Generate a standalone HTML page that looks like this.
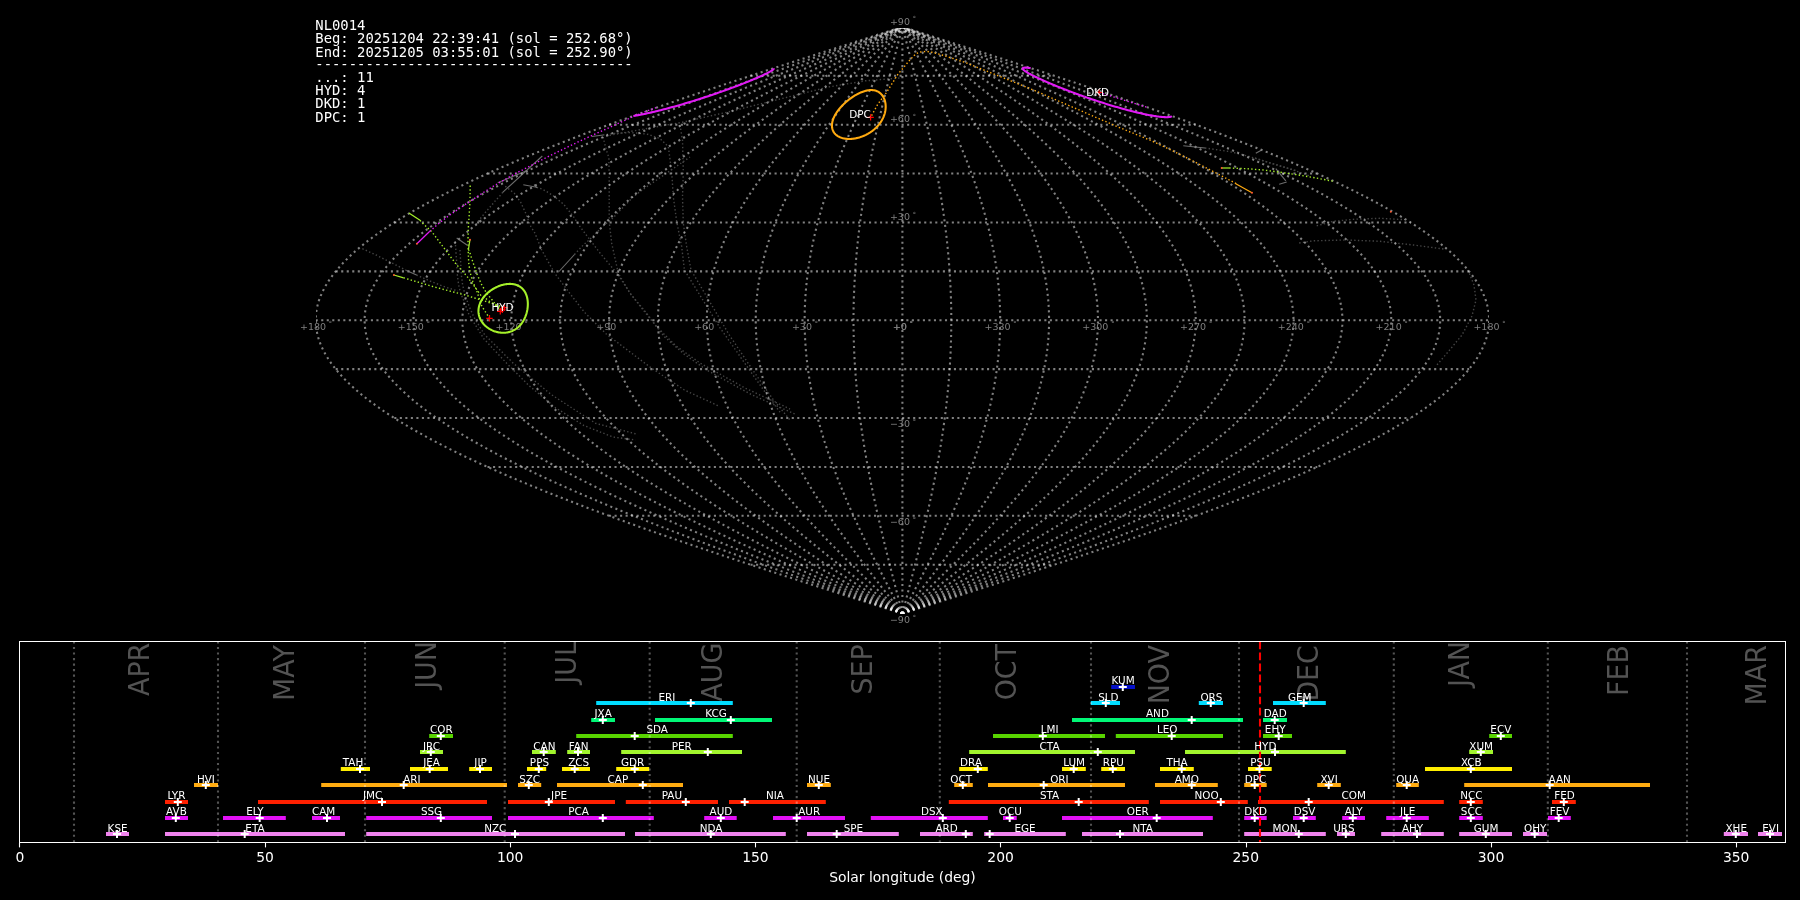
<!DOCTYPE html>
<html lang="en"><head><meta charset="utf-8"><title>NL0014 radiants</title>
<style>
html,body{margin:0;padding:0;background:#000;}
body{width:1800px;height:900px;overflow:hidden;}
svg{display:block;will-change:transform;}
text{white-space:pre;}
</style></head><body>
<svg width="1800" height="900" viewBox="0 0 1800 900">
<rect width="1800" height="900" fill="#000"/>
<clipPath id="skyclip"><rect x="316" y="28" width="1173" height="586"/></clipPath>
<g clip-path="url(#skyclip)" fill="none" stroke="#ffffff" stroke-opacity="0.5" stroke-width="2.08" stroke-dasharray="2.08 3.44">
<path d="M750.55 564.71 H1054.25"/>
<path d="M609.04 515.82 H1195.76"/>
<path d="M487.53 466.93 H1317.27"/>
<path d="M394.29 418.03 H1410.51"/>
<path d="M335.68 369.14 H1469.12"/>
<path d="M315.69 320.25 H1489.11"/>
<path d="M335.68 271.36 H1469.12"/>
<path d="M394.29 222.47 H1410.51"/>
<path d="M487.53 173.57 H1317.27"/>
<path d="M609.04 124.68 H1195.76"/>
<path d="M750.55 75.79 H1054.25"/>
<path d="M902.4 613.61 L917.76 608.72 L933.11 603.83 L948.43 598.94 L963.73 594.05 L978.98 589.16 L994.18 584.27 L1009.32 579.38 L1024.38 574.49 L1039.36 569.6 L1054.25 564.71 L1069.03 559.82 L1083.7 554.93 L1098.25 550.04 L1112.66 545.16 L1126.92 540.27 L1141.04 535.38 L1154.99 530.49 L1168.76 525.6 L1182.35 520.71 L1195.76 515.82 L1208.96 510.93 L1221.95 506.04 L1234.72 501.15 L1247.26 496.26 L1259.57 491.37 L1271.63 486.48 L1283.44 481.6 L1294.99 476.71 L1306.26 471.82 L1317.27 466.93 L1327.98 462.04 L1338.41 457.15 L1348.54 452.26 L1358.36 447.37 L1367.87 442.48 L1377.06 437.59 L1385.92 432.7 L1394.46 427.81 L1402.65 422.92 L1410.51 418.03 L1418.01 413.15 L1425.16 408.26 L1431.96 403.37 L1438.39 398.48 L1444.45 393.59 L1450.14 388.7 L1455.46 383.81 L1460.39 378.92 L1464.95 374.03 L1469.12 369.14 L1472.9 364.25 L1476.29 359.36 L1479.29 354.47 L1481.89 349.59 L1484.09 344.7 L1485.9 339.81 L1487.3 334.92 L1488.31 330.03 L1488.91 325.14 L1489.11 320.25 L1488.91 315.36 L1488.31 310.47 L1487.3 305.58 L1485.9 300.69 L1484.09 295.8 L1481.89 290.91 L1479.29 286.03 L1476.29 281.14 L1472.9 276.25 L1469.12 271.36 L1464.95 266.47 L1460.39 261.58 L1455.46 256.69 L1450.14 251.8 L1444.45 246.91 L1438.39 242.02 L1431.96 237.13 L1425.16 232.24 L1418.01 227.35 L1410.51 222.47 L1402.65 217.58 L1394.46 212.69 L1385.92 207.8 L1377.06 202.91 L1367.87 198.02 L1358.36 193.13 L1348.54 188.24 L1338.41 183.35 L1327.98 178.46 L1317.27 173.57 L1306.26 168.68 L1294.99 163.79 L1283.44 158.9 L1271.63 154.02 L1259.57 149.13 L1247.26 144.24 L1234.72 139.35 L1221.95 134.46 L1208.96 129.57 L1195.76 124.68 L1182.35 119.79 L1168.76 114.9 L1154.99 110.01 L1141.04 105.12 L1126.92 100.23 L1112.66 95.34 L1098.25 90.46 L1083.7 85.57 L1069.03 80.68 L1054.25 75.79 L1039.36 70.9 L1024.38 66.01 L1009.32 61.12 L994.18 56.23 L978.98 51.34 L963.73 46.45 L948.43 41.56 L933.11 36.67 L917.76 31.78 L902.4 26.89"/>
<path d="M902.4 613.61 L916.48 608.72 L930.55 603.83 L944.6 598.94 L958.62 594.05 L972.6 589.16 L986.53 584.27 L1000.41 579.38 L1014.22 574.49 L1027.95 569.6 L1041.6 564.71 L1055.15 559.82 L1068.59 554.93 L1081.93 550.04 L1095.14 545.16 L1108.21 540.27 L1121.15 535.38 L1133.94 530.49 L1146.56 525.6 L1159.02 520.71 L1171.31 515.82 L1183.41 510.93 L1195.32 506.04 L1207.02 501.15 L1218.52 496.26 L1229.8 491.37 L1240.86 486.48 L1251.68 481.6 L1262.27 476.71 L1272.61 471.82 L1282.69 466.93 L1292.52 462.04 L1302.08 457.15 L1311.36 452.26 L1320.36 447.37 L1329.08 442.48 L1337.5 437.59 L1345.63 432.7 L1353.45 427.81 L1360.96 422.92 L1368.16 418.03 L1375.04 413.15 L1381.6 408.26 L1387.83 403.37 L1393.72 398.48 L1399.28 393.59 L1404.5 388.7 L1409.37 383.81 L1413.89 378.92 L1418.07 374.03 L1421.89 369.14 L1425.36 364.25 L1428.46 359.36 L1431.21 354.47 L1433.6 349.59 L1435.62 344.7 L1437.27 339.81 L1438.56 334.92 L1439.48 330.03 L1440.03 325.14 L1440.22 320.25 L1440.03 315.36 L1439.48 310.47 L1438.56 305.58 L1437.27 300.69 L1435.62 295.8 L1433.6 290.91 L1431.21 286.03 L1428.46 281.14 L1425.36 276.25 L1421.89 271.36 L1418.07 266.47 L1413.89 261.58 L1409.37 256.69 L1404.5 251.8 L1399.28 246.91 L1393.72 242.02 L1387.83 237.13 L1381.6 232.24 L1375.04 227.35 L1368.16 222.47 L1360.96 217.58 L1353.45 212.69 L1345.63 207.8 L1337.5 202.91 L1329.08 198.02 L1320.36 193.13 L1311.36 188.24 L1302.08 183.35 L1292.52 178.46 L1282.69 173.57 L1272.61 168.68 L1262.27 163.79 L1251.68 158.9 L1240.86 154.02 L1229.8 149.13 L1218.52 144.24 L1207.02 139.35 L1195.32 134.46 L1183.41 129.57 L1171.31 124.68 L1159.02 119.79 L1146.56 114.9 L1133.94 110.01 L1121.15 105.12 L1108.21 100.23 L1095.14 95.34 L1081.93 90.46 L1068.59 85.57 L1055.15 80.68 L1041.6 75.79 L1027.95 70.9 L1014.22 66.01 L1000.41 61.12 L986.53 56.23 L972.6 51.34 L958.62 46.45 L944.6 41.56 L930.55 36.67 L916.48 31.78 L902.4 26.89"/>
<path d="M902.4 613.61 L915.2 608.72 L927.99 603.83 L940.76 598.94 L953.51 594.05 L966.22 589.16 L978.88 584.27 L991.5 579.38 L1004.05 574.49 L1016.54 569.6 L1028.94 564.71 L1041.26 559.82 L1053.49 554.93 L1065.61 550.04 L1077.62 545.16 L1089.5 540.27 L1101.26 535.38 L1112.89 530.49 L1124.37 525.6 L1135.69 520.71 L1146.86 515.82 L1157.86 510.93 L1168.69 506.04 L1179.33 501.15 L1189.78 496.26 L1200.04 491.37 L1210.09 486.48 L1219.93 481.6 L1229.55 476.71 L1238.95 471.82 L1248.12 466.93 L1257.05 462.04 L1265.74 457.15 L1274.18 452.26 L1282.37 447.37 L1290.29 442.48 L1297.95 437.59 L1305.34 432.7 L1312.45 427.81 L1319.28 422.92 L1325.82 418.03 L1332.08 413.15 L1338.04 408.26 L1343.7 403.37 L1349.06 398.48 L1354.11 393.59 L1358.85 388.7 L1363.28 383.81 L1367.4 378.92 L1371.19 374.03 L1374.67 369.14 L1377.82 364.25 L1380.64 359.36 L1383.14 354.47 L1385.31 349.59 L1387.14 344.7 L1388.65 339.81 L1389.82 334.92 L1390.65 330.03 L1391.16 325.14 L1391.33 320.25 L1391.16 315.36 L1390.65 310.47 L1389.82 305.58 L1388.65 300.69 L1387.14 295.8 L1385.31 290.91 L1383.14 286.03 L1380.64 281.14 L1377.82 276.25 L1374.67 271.36 L1371.19 266.47 L1367.4 261.58 L1363.28 256.69 L1358.85 251.8 L1354.11 246.91 L1349.06 242.02 L1343.7 237.13 L1338.04 232.24 L1332.08 227.35 L1325.82 222.47 L1319.28 217.58 L1312.45 212.69 L1305.34 207.8 L1297.95 202.91 L1290.29 198.02 L1282.37 193.13 L1274.18 188.24 L1265.74 183.35 L1257.05 178.46 L1248.12 173.57 L1238.95 168.68 L1229.55 163.79 L1219.93 158.9 L1210.09 154.02 L1200.04 149.13 L1189.78 144.24 L1179.33 139.35 L1168.69 134.46 L1157.86 129.57 L1146.86 124.68 L1135.69 119.79 L1124.37 114.9 L1112.89 110.01 L1101.26 105.12 L1089.5 100.23 L1077.62 95.34 L1065.61 90.46 L1053.49 85.57 L1041.26 80.68 L1028.94 75.79 L1016.54 70.9 L1004.05 66.01 L991.5 61.12 L978.88 56.23 L966.22 51.34 L953.51 46.45 L940.76 41.56 L927.99 36.67 L915.2 31.78 L902.4 26.89"/>
<path d="M902.4 613.61 L913.92 608.72 L925.43 603.83 L936.92 598.94 L948.4 594.05 L959.84 589.16 L971.24 584.27 L982.59 579.38 L993.89 574.49 L1005.12 569.6 L1016.29 564.71 L1027.38 559.82 L1038.38 554.93 L1049.29 550.04 L1060.09 545.16 L1070.79 540.27 L1081.38 535.38 L1091.84 530.49 L1102.17 525.6 L1112.37 520.71 L1122.42 515.82 L1132.32 510.93 L1142.06 506.04 L1151.64 501.15 L1161.04 496.26 L1170.27 491.37 L1179.32 486.48 L1188.18 481.6 L1196.84 476.71 L1205.3 471.82 L1213.55 466.93 L1221.59 462.04 L1229.41 457.15 L1237 452.26 L1244.37 447.37 L1251.5 442.48 L1258.39 437.59 L1265.04 432.7 L1271.44 427.81 L1277.59 422.92 L1283.48 418.03 L1289.11 413.15 L1294.47 408.26 L1299.57 403.37 L1304.39 398.48 L1308.94 393.59 L1313.21 388.7 L1317.19 383.81 L1320.9 378.92 L1324.31 374.03 L1327.44 369.14 L1330.27 364.25 L1332.82 359.36 L1335.06 354.47 L1337.01 349.59 L1338.67 344.7 L1340.02 339.81 L1341.08 334.92 L1341.83 330.03 L1342.28 325.14 L1342.43 320.25 L1342.28 315.36 L1341.83 310.47 L1341.08 305.58 L1340.02 300.69 L1338.67 295.8 L1337.01 290.91 L1335.06 286.03 L1332.82 281.14 L1330.27 276.25 L1327.44 271.36 L1324.31 266.47 L1320.9 261.58 L1317.19 256.69 L1313.21 251.8 L1308.94 246.91 L1304.39 242.02 L1299.57 237.13 L1294.47 232.24 L1289.11 227.35 L1283.48 222.47 L1277.59 217.58 L1271.44 212.69 L1265.04 207.8 L1258.39 202.91 L1251.5 198.02 L1244.37 193.13 L1237 188.24 L1229.41 183.35 L1221.59 178.46 L1213.55 173.57 L1205.3 168.68 L1196.84 163.79 L1188.18 158.9 L1179.32 154.02 L1170.27 149.13 L1161.04 144.24 L1151.64 139.35 L1142.06 134.46 L1132.32 129.57 L1122.42 124.68 L1112.37 119.79 L1102.17 114.9 L1091.84 110.01 L1081.38 105.12 L1070.79 100.23 L1060.09 95.34 L1049.29 90.46 L1038.38 85.57 L1027.38 80.68 L1016.29 75.79 L1005.12 70.9 L993.89 66.01 L982.59 61.12 L971.24 56.23 L959.84 51.34 L948.4 46.45 L936.92 41.56 L925.43 36.67 L913.92 31.78 L902.4 26.89"/>
<path d="M902.4 613.61 L912.64 608.72 L922.87 603.83 L933.09 598.94 L943.29 594.05 L953.45 589.16 L963.59 584.27 L973.68 579.38 L983.72 574.49 L993.71 569.6 L1003.63 564.71 L1013.49 559.82 L1023.27 554.93 L1032.97 550.04 L1042.57 545.16 L1052.08 540.27 L1061.49 535.38 L1070.79 530.49 L1079.97 525.6 L1089.04 520.71 L1097.97 515.82 L1106.77 510.93 L1115.43 506.04 L1123.94 501.15 L1132.31 496.26 L1140.51 491.37 L1148.55 486.48 L1156.43 481.6 L1164.12 476.71 L1171.64 471.82 L1178.98 466.93 L1186.12 462.04 L1193.07 457.15 L1199.83 452.26 L1206.37 447.37 L1212.71 442.48 L1218.84 437.59 L1224.75 432.7 L1230.44 427.81 L1235.9 422.92 L1241.14 418.03 L1246.14 413.15 L1250.91 408.26 L1255.44 403.37 L1259.72 398.48 L1263.77 393.59 L1267.56 388.7 L1271.1 383.81 L1274.4 378.92 L1277.43 374.03 L1280.21 369.14 L1282.73 364.25 L1284.99 359.36 L1286.99 354.47 L1288.72 349.59 L1290.19 344.7 L1291.4 339.81 L1292.33 334.92 L1293 330.03 L1293.41 325.14 L1293.54 320.25 L1293.41 315.36 L1293 310.47 L1292.33 305.58 L1291.4 300.69 L1290.19 295.8 L1288.72 290.91 L1286.99 286.03 L1284.99 281.14 L1282.73 276.25 L1280.21 271.36 L1277.43 266.47 L1274.4 261.58 L1271.1 256.69 L1267.56 251.8 L1263.77 246.91 L1259.72 242.02 L1255.44 237.13 L1250.91 232.24 L1246.14 227.35 L1241.14 222.47 L1235.9 217.58 L1230.44 212.69 L1224.75 207.8 L1218.84 202.91 L1212.71 198.02 L1206.37 193.13 L1199.83 188.24 L1193.07 183.35 L1186.12 178.46 L1178.98 173.57 L1171.64 168.68 L1164.12 163.79 L1156.43 158.9 L1148.55 154.02 L1140.51 149.13 L1132.31 144.24 L1123.94 139.35 L1115.43 134.46 L1106.77 129.57 L1097.97 124.68 L1089.04 119.79 L1079.97 114.9 L1070.79 110.01 L1061.49 105.12 L1052.08 100.23 L1042.57 95.34 L1032.97 90.46 L1023.27 85.57 L1013.49 80.68 L1003.63 75.79 L993.71 70.9 L983.72 66.01 L973.68 61.12 L963.59 56.23 L953.45 51.34 L943.29 46.45 L933.09 41.56 L922.87 36.67 L912.64 31.78 L902.4 26.89"/>
<path d="M902.4 613.61 L911.36 608.72 L920.31 603.83 L929.25 598.94 L938.17 594.05 L947.07 589.16 L955.94 584.27 L964.77 579.38 L973.56 574.49 L982.3 569.6 L990.98 564.71 L999.6 559.82 L1008.16 554.93 L1016.64 550.04 L1025.05 545.16 L1033.37 540.27 L1041.6 535.38 L1049.74 530.49 L1057.78 525.6 L1065.71 520.71 L1073.52 515.82 L1081.22 510.93 L1088.8 506.04 L1096.25 501.15 L1103.57 496.26 L1110.75 491.37 L1117.78 486.48 L1124.67 481.6 L1131.41 476.71 L1137.99 471.82 L1144.41 466.93 L1150.66 462.04 L1156.74 457.15 L1162.65 452.26 L1168.38 447.37 L1173.92 442.48 L1179.28 437.59 L1184.46 432.7 L1189.43 427.81 L1194.21 422.92 L1198.8 418.03 L1203.17 413.15 L1207.34 408.26 L1211.31 403.37 L1215.06 398.48 L1218.6 393.59 L1221.92 388.7 L1225.02 383.81 L1227.9 378.92 L1230.55 374.03 L1232.99 369.14 L1235.19 364.25 L1237.17 359.36 L1238.92 354.47 L1240.43 349.59 L1241.72 344.7 L1242.77 339.81 L1243.59 334.92 L1244.18 330.03 L1244.53 325.14 L1244.65 320.25 L1244.53 315.36 L1244.18 310.47 L1243.59 305.58 L1242.77 300.69 L1241.72 295.8 L1240.43 290.91 L1238.92 286.03 L1237.17 281.14 L1235.19 276.25 L1232.99 271.36 L1230.55 266.47 L1227.9 261.58 L1225.02 256.69 L1221.92 251.8 L1218.6 246.91 L1215.06 242.02 L1211.31 237.13 L1207.34 232.24 L1203.17 227.35 L1198.8 222.47 L1194.21 217.58 L1189.43 212.69 L1184.46 207.8 L1179.28 202.91 L1173.92 198.02 L1168.38 193.13 L1162.65 188.24 L1156.74 183.35 L1150.66 178.46 L1144.41 173.57 L1137.99 168.68 L1131.41 163.79 L1124.67 158.9 L1117.78 154.02 L1110.75 149.13 L1103.57 144.24 L1096.25 139.35 L1088.8 134.46 L1081.22 129.57 L1073.52 124.68 L1065.71 119.79 L1057.78 114.9 L1049.74 110.01 L1041.6 105.12 L1033.37 100.23 L1025.05 95.34 L1016.64 90.46 L1008.16 85.57 L999.6 80.68 L990.98 75.79 L982.3 70.9 L973.56 66.01 L964.77 61.12 L955.94 56.23 L947.07 51.34 L938.17 46.45 L929.25 41.56 L920.31 36.67 L911.36 31.78 L902.4 26.89"/>
<path d="M902.4 613.61 L910.08 608.72 L917.75 603.83 L925.42 598.94 L933.06 594.05 L940.69 589.16 L948.29 584.27 L955.86 579.38 L963.39 574.49 L970.88 569.6 L978.33 564.71 L985.72 559.82 L993.05 554.93 L1000.32 550.04 L1007.53 545.16 L1014.66 540.27 L1021.72 535.38 L1028.69 530.49 L1035.58 525.6 L1042.38 520.71 L1049.08 515.82 L1055.68 510.93 L1062.17 506.04 L1068.56 501.15 L1074.83 496.26 L1080.98 491.37 L1087.01 486.48 L1092.92 481.6 L1098.69 476.71 L1104.33 471.82 L1109.83 466.93 L1115.19 462.04 L1120.41 457.15 L1125.47 452.26 L1130.38 447.37 L1135.13 442.48 L1139.73 437.59 L1144.16 432.7 L1148.43 427.81 L1152.53 422.92 L1156.45 418.03 L1160.21 413.15 L1163.78 408.26 L1167.18 403.37 L1170.39 398.48 L1173.42 393.59 L1176.27 388.7 L1178.93 383.81 L1181.4 378.92 L1183.67 374.03 L1185.76 369.14 L1187.65 364.25 L1189.34 359.36 L1190.84 354.47 L1192.14 349.59 L1193.25 344.7 L1194.15 339.81 L1194.85 334.92 L1195.35 330.03 L1195.65 325.14 L1195.76 320.25 L1195.65 315.36 L1195.35 310.47 L1194.85 305.58 L1194.15 300.69 L1193.25 295.8 L1192.14 290.91 L1190.84 286.03 L1189.34 281.14 L1187.65 276.25 L1185.76 271.36 L1183.67 266.47 L1181.4 261.58 L1178.93 256.69 L1176.27 251.8 L1173.42 246.91 L1170.39 242.02 L1167.18 237.13 L1163.78 232.24 L1160.21 227.35 L1156.45 222.47 L1152.53 217.58 L1148.43 212.69 L1144.16 207.8 L1139.73 202.91 L1135.13 198.02 L1130.38 193.13 L1125.47 188.24 L1120.41 183.35 L1115.19 178.46 L1109.83 173.57 L1104.33 168.68 L1098.69 163.79 L1092.92 158.9 L1087.01 154.02 L1080.98 149.13 L1074.83 144.24 L1068.56 139.35 L1062.17 134.46 L1055.68 129.57 L1049.08 124.68 L1042.38 119.79 L1035.58 114.9 L1028.69 110.01 L1021.72 105.12 L1014.66 100.23 L1007.53 95.34 L1000.32 90.46 L993.05 85.57 L985.72 80.68 L978.33 75.79 L970.88 70.9 L963.39 66.01 L955.86 61.12 L948.29 56.23 L940.69 51.34 L933.06 46.45 L925.42 41.56 L917.75 36.67 L910.08 31.78 L902.4 26.89"/>
<path d="M902.4 613.61 L908.8 608.72 L915.19 603.83 L921.58 598.94 L927.95 594.05 L934.31 589.16 L940.64 584.27 L946.95 579.38 L953.23 574.49 L959.47 569.6 L965.67 564.71 L971.83 559.82 L977.94 554.93 L984 550.04 L990.01 545.16 L995.95 540.27 L1001.83 535.38 L1007.64 530.49 L1013.38 525.6 L1019.05 520.71 L1024.63 515.82 L1030.13 510.93 L1035.54 506.04 L1040.87 501.15 L1046.09 496.26 L1051.22 491.37 L1056.25 486.48 L1061.17 481.6 L1065.98 476.71 L1070.68 471.82 L1075.26 466.93 L1079.73 462.04 L1084.07 457.15 L1088.29 452.26 L1092.38 447.37 L1096.35 442.48 L1100.17 437.59 L1103.87 432.7 L1107.42 427.81 L1110.84 422.92 L1114.11 418.03 L1117.24 413.15 L1120.22 408.26 L1123.05 403.37 L1125.73 398.48 L1128.25 393.59 L1130.63 388.7 L1132.84 383.81 L1134.9 378.92 L1136.8 374.03 L1138.53 369.14 L1140.11 364.25 L1141.52 359.36 L1142.77 354.47 L1143.85 349.59 L1144.77 344.7 L1145.52 339.81 L1146.11 334.92 L1146.53 330.03 L1146.78 325.14 L1146.86 320.25 L1146.78 315.36 L1146.53 310.47 L1146.11 305.58 L1145.52 300.69 L1144.77 295.8 L1143.85 290.91 L1142.77 286.03 L1141.52 281.14 L1140.11 276.25 L1138.53 271.36 L1136.8 266.47 L1134.9 261.58 L1132.84 256.69 L1130.63 251.8 L1128.25 246.91 L1125.73 242.02 L1123.05 237.13 L1120.22 232.24 L1117.24 227.35 L1114.11 222.47 L1110.84 217.58 L1107.42 212.69 L1103.87 207.8 L1100.17 202.91 L1096.35 198.02 L1092.38 193.13 L1088.29 188.24 L1084.07 183.35 L1079.73 178.46 L1075.26 173.57 L1070.68 168.68 L1065.98 163.79 L1061.17 158.9 L1056.25 154.02 L1051.22 149.13 L1046.09 144.24 L1040.87 139.35 L1035.54 134.46 L1030.13 129.57 L1024.63 124.68 L1019.05 119.79 L1013.38 114.9 L1007.64 110.01 L1001.83 105.12 L995.95 100.23 L990.01 95.34 L984 90.46 L977.94 85.57 L971.83 80.68 L965.67 75.79 L959.47 70.9 L953.23 66.01 L946.95 61.12 L940.64 56.23 L934.31 51.34 L927.95 46.45 L921.58 41.56 L915.19 36.67 L908.8 31.78 L902.4 26.89"/>
<path d="M902.4 613.61 L907.52 608.72 L912.64 603.83 L917.74 598.94 L922.84 594.05 L927.93 589.16 L932.99 584.27 L938.04 579.38 L943.06 574.49 L948.05 569.6 L953.02 564.71 L957.94 559.82 L962.83 554.93 L967.68 550.04 L972.49 545.16 L977.24 540.27 L981.95 535.38 L986.6 530.49 L991.19 525.6 L995.72 520.71 L1000.18 515.82 L1004.59 510.93 L1008.92 506.04 L1013.17 501.15 L1017.35 496.26 L1021.46 491.37 L1025.48 486.48 L1029.41 481.6 L1033.26 476.71 L1037.02 471.82 L1040.69 466.93 L1044.26 462.04 L1047.74 457.15 L1051.11 452.26 L1054.39 447.37 L1057.56 442.48 L1060.62 437.59 L1063.57 432.7 L1066.42 427.81 L1069.15 422.92 L1071.77 418.03 L1074.27 413.15 L1076.65 408.26 L1078.92 403.37 L1081.06 398.48 L1083.08 393.59 L1084.98 388.7 L1086.75 383.81 L1088.4 378.92 L1089.92 374.03 L1091.31 369.14 L1092.57 364.25 L1093.7 359.36 L1094.7 354.47 L1095.56 349.59 L1096.3 344.7 L1096.9 339.81 L1097.37 334.92 L1097.7 330.03 L1097.9 325.14 L1097.97 320.25 L1097.9 315.36 L1097.7 310.47 L1097.37 305.58 L1096.9 300.69 L1096.3 295.8 L1095.56 290.91 L1094.7 286.03 L1093.7 281.14 L1092.57 276.25 L1091.31 271.36 L1089.92 266.47 L1088.4 261.58 L1086.75 256.69 L1084.98 251.8 L1083.08 246.91 L1081.06 242.02 L1078.92 237.13 L1076.65 232.24 L1074.27 227.35 L1071.77 222.47 L1069.15 217.58 L1066.42 212.69 L1063.57 207.8 L1060.62 202.91 L1057.56 198.02 L1054.39 193.13 L1051.11 188.24 L1047.74 183.35 L1044.26 178.46 L1040.69 173.57 L1037.02 168.68 L1033.26 163.79 L1029.41 158.9 L1025.48 154.02 L1021.46 149.13 L1017.35 144.24 L1013.17 139.35 L1008.92 134.46 L1004.59 129.57 L1000.18 124.68 L995.72 119.79 L991.19 114.9 L986.6 110.01 L981.95 105.12 L977.24 100.23 L972.49 95.34 L967.68 90.46 L962.83 85.57 L957.94 80.68 L953.02 75.79 L948.05 70.9 L943.06 66.01 L938.04 61.12 L932.99 56.23 L927.93 51.34 L922.84 46.45 L917.74 41.56 L912.64 36.67 L907.52 31.78 L902.4 26.89"/>
<path d="M902.4 613.61 L906.24 608.72 L910.08 603.83 L913.91 598.94 L917.73 594.05 L921.55 589.16 L925.35 584.27 L929.13 579.38 L932.9 574.49 L936.64 569.6 L940.36 564.71 L944.06 559.82 L947.73 554.93 L951.36 550.04 L954.96 545.16 L958.53 540.27 L962.06 535.38 L965.55 530.49 L968.99 525.6 L972.39 520.71 L975.74 515.82 L979.04 510.93 L982.29 506.04 L985.48 501.15 L988.61 496.26 L991.69 491.37 L994.71 486.48 L997.66 481.6 L1000.55 476.71 L1003.37 471.82 L1006.12 466.93 L1008.8 462.04 L1011.4 457.15 L1013.93 452.26 L1016.39 447.37 L1018.77 442.48 L1021.06 437.59 L1023.28 432.7 L1025.41 427.81 L1027.46 422.92 L1029.43 418.03 L1031.3 413.15 L1033.09 408.26 L1034.79 403.37 L1036.4 398.48 L1037.91 393.59 L1039.34 388.7 L1040.66 383.81 L1041.9 378.92 L1043.04 374.03 L1044.08 369.14 L1045.02 364.25 L1045.87 359.36 L1046.62 354.47 L1047.27 349.59 L1047.82 344.7 L1048.27 339.81 L1048.63 334.92 L1048.88 330.03 L1049.03 325.14 L1049.08 320.25 L1049.03 315.36 L1048.88 310.47 L1048.63 305.58 L1048.27 300.69 L1047.82 295.8 L1047.27 290.91 L1046.62 286.03 L1045.87 281.14 L1045.02 276.25 L1044.08 271.36 L1043.04 266.47 L1041.9 261.58 L1040.66 256.69 L1039.34 251.8 L1037.91 246.91 L1036.4 242.02 L1034.79 237.13 L1033.09 232.24 L1031.3 227.35 L1029.43 222.47 L1027.46 217.58 L1025.41 212.69 L1023.28 207.8 L1021.06 202.91 L1018.77 198.02 L1016.39 193.13 L1013.93 188.24 L1011.4 183.35 L1008.8 178.46 L1006.12 173.57 L1003.37 168.68 L1000.55 163.79 L997.66 158.9 L994.71 154.02 L991.69 149.13 L988.61 144.24 L985.48 139.35 L982.29 134.46 L979.04 129.57 L975.74 124.68 L972.39 119.79 L968.99 114.9 L965.55 110.01 L962.06 105.12 L958.53 100.23 L954.96 95.34 L951.36 90.46 L947.73 85.57 L944.06 80.68 L940.36 75.79 L936.64 70.9 L932.9 66.01 L929.13 61.12 L925.35 56.23 L921.55 51.34 L917.73 46.45 L913.91 41.56 L910.08 36.67 L906.24 31.78 L902.4 26.89"/>
<path d="M902.4 613.61 L904.96 608.72 L907.52 603.83 L910.07 598.94 L912.62 594.05 L915.16 589.16 L917.7 584.27 L920.22 579.38 L922.73 574.49 L925.23 569.6 L927.71 564.71 L930.17 559.82 L932.62 554.93 L935.04 550.04 L937.44 545.16 L939.82 540.27 L942.17 535.38 L944.5 530.49 L946.79 525.6 L949.06 520.71 L951.29 515.82 L953.49 510.93 L955.66 506.04 L957.79 501.15 L959.88 496.26 L961.93 491.37 L963.94 486.48 L965.91 481.6 L967.83 476.71 L969.71 471.82 L971.54 466.93 L973.33 462.04 L975.07 457.15 L976.76 452.26 L978.39 447.37 L979.98 442.48 L981.51 437.59 L982.99 432.7 L984.41 427.81 L985.78 422.92 L987.08 418.03 L988.34 413.15 L989.53 408.26 L990.66 403.37 L991.73 398.48 L992.74 393.59 L993.69 388.7 L994.58 383.81 L995.4 378.92 L996.16 374.03 L996.85 369.14 L997.48 364.25 L998.05 359.36 L998.55 354.47 L998.98 349.59 L999.35 344.7 L999.65 339.81 L999.88 334.92 L1000.05 330.03 L1000.15 325.14 L1000.18 320.25 L1000.15 315.36 L1000.05 310.47 L999.88 305.58 L999.65 300.69 L999.35 295.8 L998.98 290.91 L998.55 286.03 L998.05 281.14 L997.48 276.25 L996.85 271.36 L996.16 266.47 L995.4 261.58 L994.58 256.69 L993.69 251.8 L992.74 246.91 L991.73 242.02 L990.66 237.13 L989.53 232.24 L988.34 227.35 L987.08 222.47 L985.78 217.58 L984.41 212.69 L982.99 207.8 L981.51 202.91 L979.98 198.02 L978.39 193.13 L976.76 188.24 L975.07 183.35 L973.33 178.46 L971.54 173.57 L969.71 168.68 L967.83 163.79 L965.91 158.9 L963.94 154.02 L961.93 149.13 L959.88 144.24 L957.79 139.35 L955.66 134.46 L953.49 129.57 L951.29 124.68 L949.06 119.79 L946.79 114.9 L944.5 110.01 L942.17 105.12 L939.82 100.23 L937.44 95.34 L935.04 90.46 L932.62 85.57 L930.17 80.68 L927.71 75.79 L925.23 70.9 L922.73 66.01 L920.22 61.12 L917.7 56.23 L915.16 51.34 L912.62 46.45 L910.07 41.56 L907.52 36.67 L904.96 31.78 L902.4 26.89"/>
<path d="M902.4 613.61 L903.68 608.72 L904.96 603.83 L906.24 598.94 L907.51 594.05 L908.78 589.16 L910.05 584.27 L911.31 579.38 L912.57 574.49 L913.81 569.6 L915.05 564.71 L916.29 559.82 L917.51 554.93 L918.72 550.04 L919.92 545.16 L921.11 540.27 L922.29 535.38 L923.45 530.49 L924.6 525.6 L925.73 520.71 L926.85 515.82 L927.95 510.93 L929.03 506.04 L930.09 501.15 L931.14 496.26 L932.16 491.37 L933.17 486.48 L934.15 481.6 L935.12 476.71 L936.06 471.82 L936.97 466.93 L937.87 462.04 L938.73 457.15 L939.58 452.26 L940.4 447.37 L941.19 442.48 L941.95 437.59 L942.69 432.7 L943.4 427.81 L944.09 422.92 L944.74 418.03 L945.37 413.15 L945.96 408.26 L946.53 403.37 L947.07 398.48 L947.57 393.59 L948.05 388.7 L948.49 383.81 L948.9 378.92 L949.28 374.03 L949.63 369.14 L949.94 364.25 L950.22 359.36 L950.47 354.47 L950.69 349.59 L950.87 344.7 L951.02 339.81 L951.14 334.92 L951.23 330.03 L951.28 325.14 L951.29 320.25 L951.28 315.36 L951.23 310.47 L951.14 305.58 L951.02 300.69 L950.87 295.8 L950.69 290.91 L950.47 286.03 L950.22 281.14 L949.94 276.25 L949.63 271.36 L949.28 266.47 L948.9 261.58 L948.49 256.69 L948.05 251.8 L947.57 246.91 L947.07 242.02 L946.53 237.13 L945.96 232.24 L945.37 227.35 L944.74 222.47 L944.09 217.58 L943.4 212.69 L942.69 207.8 L941.95 202.91 L941.19 198.02 L940.4 193.13 L939.58 188.24 L938.73 183.35 L937.87 178.46 L936.97 173.57 L936.06 168.68 L935.12 163.79 L934.15 158.9 L933.17 154.02 L932.16 149.13 L931.14 144.24 L930.09 139.35 L929.03 134.46 L927.95 129.57 L926.85 124.68 L925.73 119.79 L924.6 114.9 L923.45 110.01 L922.29 105.12 L921.11 100.23 L919.92 95.34 L918.72 90.46 L917.51 85.57 L916.29 80.68 L915.05 75.79 L913.81 70.9 L912.57 66.01 L911.31 61.12 L910.05 56.23 L908.78 51.34 L907.51 46.45 L906.24 41.56 L904.96 36.67 L903.68 31.78 L902.4 26.89"/>
<path d="M902.4 613.61 L902.4 608.72 L902.4 603.83 L902.4 598.94 L902.4 594.05 L902.4 589.16 L902.4 584.27 L902.4 579.38 L902.4 574.49 L902.4 569.6 L902.4 564.71 L902.4 559.82 L902.4 554.93 L902.4 550.04 L902.4 545.16 L902.4 540.27 L902.4 535.38 L902.4 530.49 L902.4 525.6 L902.4 520.71 L902.4 515.82 L902.4 510.93 L902.4 506.04 L902.4 501.15 L902.4 496.26 L902.4 491.37 L902.4 486.48 L902.4 481.6 L902.4 476.71 L902.4 471.82 L902.4 466.93 L902.4 462.04 L902.4 457.15 L902.4 452.26 L902.4 447.37 L902.4 442.48 L902.4 437.59 L902.4 432.7 L902.4 427.81 L902.4 422.92 L902.4 418.03 L902.4 413.15 L902.4 408.26 L902.4 403.37 L902.4 398.48 L902.4 393.59 L902.4 388.7 L902.4 383.81 L902.4 378.92 L902.4 374.03 L902.4 369.14 L902.4 364.25 L902.4 359.36 L902.4 354.47 L902.4 349.59 L902.4 344.7 L902.4 339.81 L902.4 334.92 L902.4 330.03 L902.4 325.14 L902.4 320.25 L902.4 315.36 L902.4 310.47 L902.4 305.58 L902.4 300.69 L902.4 295.8 L902.4 290.91 L902.4 286.03 L902.4 281.14 L902.4 276.25 L902.4 271.36 L902.4 266.47 L902.4 261.58 L902.4 256.69 L902.4 251.8 L902.4 246.91 L902.4 242.02 L902.4 237.13 L902.4 232.24 L902.4 227.35 L902.4 222.47 L902.4 217.58 L902.4 212.69 L902.4 207.8 L902.4 202.91 L902.4 198.02 L902.4 193.13 L902.4 188.24 L902.4 183.35 L902.4 178.46 L902.4 173.57 L902.4 168.68 L902.4 163.79 L902.4 158.9 L902.4 154.02 L902.4 149.13 L902.4 144.24 L902.4 139.35 L902.4 134.46 L902.4 129.57 L902.4 124.68 L902.4 119.79 L902.4 114.9 L902.4 110.01 L902.4 105.12 L902.4 100.23 L902.4 95.34 L902.4 90.46 L902.4 85.57 L902.4 80.68 L902.4 75.79 L902.4 70.9 L902.4 66.01 L902.4 61.12 L902.4 56.23 L902.4 51.34 L902.4 46.45 L902.4 41.56 L902.4 36.67 L902.4 31.78 L902.4 26.89"/>
<path d="M902.4 613.61 L901.12 608.72 L899.84 603.83 L898.56 598.94 L897.29 594.05 L896.02 589.16 L894.75 584.27 L893.49 579.38 L892.23 574.49 L890.99 569.6 L889.75 564.71 L888.51 559.82 L887.29 554.93 L886.08 550.04 L884.88 545.16 L883.69 540.27 L882.51 535.38 L881.35 530.49 L880.2 525.6 L879.07 520.71 L877.95 515.82 L876.85 510.93 L875.77 506.04 L874.71 501.15 L873.66 496.26 L872.64 491.37 L871.63 486.48 L870.65 481.6 L869.68 476.71 L868.74 471.82 L867.83 466.93 L866.93 462.04 L866.07 457.15 L865.22 452.26 L864.4 447.37 L863.61 442.48 L862.85 437.59 L862.11 432.7 L861.4 427.81 L860.71 422.92 L860.06 418.03 L859.43 413.15 L858.84 408.26 L858.27 403.37 L857.73 398.48 L857.23 393.59 L856.75 388.7 L856.31 383.81 L855.9 378.92 L855.52 374.03 L855.17 369.14 L854.86 364.25 L854.58 359.36 L854.33 354.47 L854.11 349.59 L853.93 344.7 L853.78 339.81 L853.66 334.92 L853.57 330.03 L853.52 325.14 L853.51 320.25 L853.52 315.36 L853.57 310.47 L853.66 305.58 L853.78 300.69 L853.93 295.8 L854.11 290.91 L854.33 286.03 L854.58 281.14 L854.86 276.25 L855.17 271.36 L855.52 266.47 L855.9 261.58 L856.31 256.69 L856.75 251.8 L857.23 246.91 L857.73 242.02 L858.27 237.13 L858.84 232.24 L859.43 227.35 L860.06 222.47 L860.71 217.58 L861.4 212.69 L862.11 207.8 L862.85 202.91 L863.61 198.02 L864.4 193.13 L865.22 188.24 L866.07 183.35 L866.93 178.46 L867.83 173.57 L868.74 168.68 L869.68 163.79 L870.65 158.9 L871.63 154.02 L872.64 149.13 L873.66 144.24 L874.71 139.35 L875.77 134.46 L876.85 129.57 L877.95 124.68 L879.07 119.79 L880.2 114.9 L881.35 110.01 L882.51 105.12 L883.69 100.23 L884.88 95.34 L886.08 90.46 L887.29 85.57 L888.51 80.68 L889.75 75.79 L890.99 70.9 L892.23 66.01 L893.49 61.12 L894.75 56.23 L896.02 51.34 L897.29 46.45 L898.56 41.56 L899.84 36.67 L901.12 31.78 L902.4 26.89"/>
<path d="M902.4 613.61 L899.84 608.72 L897.28 603.83 L894.73 598.94 L892.18 594.05 L889.64 589.16 L887.1 584.27 L884.58 579.38 L882.07 574.49 L879.57 569.6 L877.09 564.71 L874.63 559.82 L872.18 554.93 L869.76 550.04 L867.36 545.16 L864.98 540.27 L862.63 535.38 L860.3 530.49 L858.01 525.6 L855.74 520.71 L853.51 515.82 L851.31 510.93 L849.14 506.04 L847.01 501.15 L844.92 496.26 L842.87 491.37 L840.86 486.48 L838.89 481.6 L836.97 476.71 L835.09 471.82 L833.26 466.93 L831.47 462.04 L829.73 457.15 L828.04 452.26 L826.41 447.37 L824.82 442.48 L823.29 437.59 L821.81 432.7 L820.39 427.81 L819.02 422.92 L817.72 418.03 L816.46 413.15 L815.27 408.26 L814.14 403.37 L813.07 398.48 L812.06 393.59 L811.11 388.7 L810.22 383.81 L809.4 378.92 L808.64 374.03 L807.95 369.14 L807.32 364.25 L806.75 359.36 L806.25 354.47 L805.82 349.59 L805.45 344.7 L805.15 339.81 L804.92 334.92 L804.75 330.03 L804.65 325.14 L804.62 320.25 L804.65 315.36 L804.75 310.47 L804.92 305.58 L805.15 300.69 L805.45 295.8 L805.82 290.91 L806.25 286.03 L806.75 281.14 L807.32 276.25 L807.95 271.36 L808.64 266.47 L809.4 261.58 L810.22 256.69 L811.11 251.8 L812.06 246.91 L813.07 242.02 L814.14 237.13 L815.27 232.24 L816.46 227.35 L817.72 222.47 L819.02 217.58 L820.39 212.69 L821.81 207.8 L823.29 202.91 L824.82 198.02 L826.41 193.13 L828.04 188.24 L829.73 183.35 L831.47 178.46 L833.26 173.57 L835.09 168.68 L836.97 163.79 L838.89 158.9 L840.86 154.02 L842.87 149.13 L844.92 144.24 L847.01 139.35 L849.14 134.46 L851.31 129.57 L853.51 124.68 L855.74 119.79 L858.01 114.9 L860.3 110.01 L862.63 105.12 L864.98 100.23 L867.36 95.34 L869.76 90.46 L872.18 85.57 L874.63 80.68 L877.09 75.79 L879.57 70.9 L882.07 66.01 L884.58 61.12 L887.1 56.23 L889.64 51.34 L892.18 46.45 L894.73 41.56 L897.28 36.67 L899.84 31.78 L902.4 26.89"/>
<path d="M902.4 613.61 L898.56 608.72 L894.72 603.83 L890.89 598.94 L887.07 594.05 L883.25 589.16 L879.45 584.27 L875.67 579.38 L871.9 574.49 L868.16 569.6 L864.44 564.71 L860.74 559.82 L857.07 554.93 L853.44 550.04 L849.84 545.16 L846.27 540.27 L842.74 535.38 L839.25 530.49 L835.81 525.6 L832.41 520.71 L829.06 515.82 L825.76 510.93 L822.51 506.04 L819.32 501.15 L816.19 496.26 L813.11 491.37 L810.09 486.48 L807.14 481.6 L804.25 476.71 L801.43 471.82 L798.68 466.93 L796 462.04 L793.4 457.15 L790.87 452.26 L788.41 447.37 L786.03 442.48 L783.74 437.59 L781.52 432.7 L779.39 427.81 L777.34 422.92 L775.37 418.03 L773.5 413.15 L771.71 408.26 L770.01 403.37 L768.4 398.48 L766.89 393.59 L765.46 388.7 L764.14 383.81 L762.9 378.92 L761.76 374.03 L760.72 369.14 L759.78 364.25 L758.93 359.36 L758.18 354.47 L757.53 349.59 L756.98 344.7 L756.53 339.81 L756.17 334.92 L755.92 330.03 L755.77 325.14 L755.72 320.25 L755.77 315.36 L755.92 310.47 L756.17 305.58 L756.53 300.69 L756.98 295.8 L757.53 290.91 L758.18 286.03 L758.93 281.14 L759.78 276.25 L760.72 271.36 L761.76 266.47 L762.9 261.58 L764.14 256.69 L765.46 251.8 L766.89 246.91 L768.4 242.02 L770.01 237.13 L771.71 232.24 L773.5 227.35 L775.37 222.47 L777.34 217.58 L779.39 212.69 L781.52 207.8 L783.74 202.91 L786.03 198.02 L788.41 193.13 L790.87 188.24 L793.4 183.35 L796 178.46 L798.68 173.57 L801.43 168.68 L804.25 163.79 L807.14 158.9 L810.09 154.02 L813.11 149.13 L816.19 144.24 L819.32 139.35 L822.51 134.46 L825.76 129.57 L829.06 124.68 L832.41 119.79 L835.81 114.9 L839.25 110.01 L842.74 105.12 L846.27 100.23 L849.84 95.34 L853.44 90.46 L857.07 85.57 L860.74 80.68 L864.44 75.79 L868.16 70.9 L871.9 66.01 L875.67 61.12 L879.45 56.23 L883.25 51.34 L887.07 46.45 L890.89 41.56 L894.72 36.67 L898.56 31.78 L902.4 26.89"/>
<path d="M902.4 613.61 L897.28 608.72 L892.16 603.83 L887.06 598.94 L881.96 594.05 L876.87 589.16 L871.81 584.27 L866.76 579.38 L861.74 574.49 L856.75 569.6 L851.78 564.71 L846.86 559.82 L841.97 554.93 L837.12 550.04 L832.31 545.16 L827.56 540.27 L822.85 535.38 L818.2 530.49 L813.61 525.6 L809.08 520.71 L804.62 515.82 L800.21 510.93 L795.88 506.04 L791.63 501.15 L787.45 496.26 L783.34 491.37 L779.32 486.48 L775.39 481.6 L771.54 476.71 L767.78 471.82 L764.11 466.93 L760.54 462.04 L757.06 457.15 L753.69 452.26 L750.41 447.37 L747.24 442.48 L744.18 437.59 L741.23 432.7 L738.38 427.81 L735.65 422.92 L733.03 418.03 L730.53 413.15 L728.15 408.26 L725.88 403.37 L723.74 398.48 L721.72 393.59 L719.82 388.7 L718.05 383.81 L716.4 378.92 L714.88 374.03 L713.49 369.14 L712.23 364.25 L711.1 359.36 L710.1 354.47 L709.24 349.59 L708.5 344.7 L707.9 339.81 L707.43 334.92 L707.1 330.03 L706.9 325.14 L706.83 320.25 L706.9 315.36 L707.1 310.47 L707.43 305.58 L707.9 300.69 L708.5 295.8 L709.24 290.91 L710.1 286.03 L711.1 281.14 L712.23 276.25 L713.49 271.36 L714.88 266.47 L716.4 261.58 L718.05 256.69 L719.82 251.8 L721.72 246.91 L723.74 242.02 L725.88 237.13 L728.15 232.24 L730.53 227.35 L733.03 222.47 L735.65 217.58 L738.38 212.69 L741.23 207.8 L744.18 202.91 L747.24 198.02 L750.41 193.13 L753.69 188.24 L757.06 183.35 L760.54 178.46 L764.11 173.57 L767.78 168.68 L771.54 163.79 L775.39 158.9 L779.32 154.02 L783.34 149.13 L787.45 144.24 L791.63 139.35 L795.88 134.46 L800.21 129.57 L804.62 124.68 L809.08 119.79 L813.61 114.9 L818.2 110.01 L822.85 105.12 L827.56 100.23 L832.31 95.34 L837.12 90.46 L841.97 85.57 L846.86 80.68 L851.78 75.79 L856.75 70.9 L861.74 66.01 L866.76 61.12 L871.81 56.23 L876.87 51.34 L881.96 46.45 L887.06 41.56 L892.16 36.67 L897.28 31.78 L902.4 26.89"/>
<path d="M902.4 613.61 L896 608.72 L889.61 603.83 L883.22 598.94 L876.85 594.05 L870.49 589.16 L864.16 584.27 L857.85 579.38 L851.57 574.49 L845.33 569.6 L839.13 564.71 L832.97 559.82 L826.86 554.93 L820.8 550.04 L814.79 545.16 L808.85 540.27 L802.97 535.38 L797.16 530.49 L791.42 525.6 L785.75 520.71 L780.17 515.82 L774.67 510.93 L769.26 506.04 L763.93 501.15 L758.71 496.26 L753.58 491.37 L748.55 486.48 L743.63 481.6 L738.82 476.71 L734.12 471.82 L729.54 466.93 L725.07 462.04 L720.73 457.15 L716.51 452.26 L712.42 447.37 L708.45 442.48 L704.63 437.59 L700.93 432.7 L697.38 427.81 L693.96 422.92 L690.69 418.03 L687.56 413.15 L684.58 408.26 L681.75 403.37 L679.07 398.48 L676.55 393.59 L674.17 388.7 L671.96 383.81 L669.9 378.92 L668 374.03 L666.27 369.14 L664.69 364.25 L663.28 359.36 L662.03 354.47 L660.95 349.59 L660.03 344.7 L659.28 339.81 L658.69 334.92 L658.27 330.03 L658.02 325.14 L657.94 320.25 L658.02 315.36 L658.27 310.47 L658.69 305.58 L659.28 300.69 L660.03 295.8 L660.95 290.91 L662.03 286.03 L663.28 281.14 L664.69 276.25 L666.27 271.36 L668 266.47 L669.9 261.58 L671.96 256.69 L674.17 251.8 L676.55 246.91 L679.07 242.02 L681.75 237.13 L684.58 232.24 L687.56 227.35 L690.69 222.47 L693.96 217.58 L697.38 212.69 L700.93 207.8 L704.63 202.91 L708.45 198.02 L712.42 193.13 L716.51 188.24 L720.73 183.35 L725.07 178.46 L729.54 173.57 L734.12 168.68 L738.82 163.79 L743.63 158.9 L748.55 154.02 L753.58 149.13 L758.71 144.24 L763.93 139.35 L769.26 134.46 L774.67 129.57 L780.17 124.68 L785.75 119.79 L791.42 114.9 L797.16 110.01 L802.97 105.12 L808.85 100.23 L814.79 95.34 L820.8 90.46 L826.86 85.57 L832.97 80.68 L839.13 75.79 L845.33 70.9 L851.57 66.01 L857.85 61.12 L864.16 56.23 L870.49 51.34 L876.85 46.45 L883.22 41.56 L889.61 36.67 L896 31.78 L902.4 26.89"/>
<path d="M902.4 613.61 L894.72 608.72 L887.05 603.83 L879.38 598.94 L871.74 594.05 L864.11 589.16 L856.51 584.27 L848.94 579.38 L841.41 574.49 L833.92 569.6 L826.47 564.71 L819.08 559.82 L811.75 554.93 L804.48 550.04 L797.27 545.16 L790.14 540.27 L783.08 535.38 L776.11 530.49 L769.22 525.6 L762.42 520.71 L755.72 515.82 L749.12 510.93 L742.63 506.04 L736.24 501.15 L729.97 496.26 L723.82 491.37 L717.79 486.48 L711.88 481.6 L706.11 476.71 L700.47 471.82 L694.97 466.93 L689.61 462.04 L684.39 457.15 L679.33 452.26 L674.42 447.37 L669.67 442.48 L665.07 437.59 L660.64 432.7 L656.37 427.81 L652.27 422.92 L648.35 418.03 L644.59 413.15 L641.02 408.26 L637.62 403.37 L634.41 398.48 L631.38 393.59 L628.53 388.7 L625.87 383.81 L623.4 378.92 L621.13 374.03 L619.04 369.14 L617.15 364.25 L615.46 359.36 L613.96 354.47 L612.66 349.59 L611.55 344.7 L610.65 339.81 L609.95 334.92 L609.45 330.03 L609.15 325.14 L609.04 320.25 L609.15 315.36 L609.45 310.47 L609.95 305.58 L610.65 300.69 L611.55 295.8 L612.66 290.91 L613.96 286.03 L615.46 281.14 L617.15 276.25 L619.04 271.36 L621.13 266.47 L623.4 261.58 L625.87 256.69 L628.53 251.8 L631.38 246.91 L634.41 242.02 L637.62 237.13 L641.02 232.24 L644.59 227.35 L648.35 222.47 L652.27 217.58 L656.37 212.69 L660.64 207.8 L665.07 202.91 L669.67 198.02 L674.42 193.13 L679.33 188.24 L684.39 183.35 L689.61 178.46 L694.97 173.57 L700.47 168.68 L706.11 163.79 L711.88 158.9 L717.79 154.02 L723.82 149.13 L729.97 144.24 L736.24 139.35 L742.63 134.46 L749.12 129.57 L755.72 124.68 L762.42 119.79 L769.22 114.9 L776.11 110.01 L783.08 105.12 L790.14 100.23 L797.27 95.34 L804.48 90.46 L811.75 85.57 L819.08 80.68 L826.47 75.79 L833.92 70.9 L841.41 66.01 L848.94 61.12 L856.51 56.23 L864.11 51.34 L871.74 46.45 L879.38 41.56 L887.05 36.67 L894.72 31.78 L902.4 26.89"/>
<path d="M902.4 613.61 L893.44 608.72 L884.49 603.83 L875.55 598.94 L866.63 594.05 L857.73 589.16 L848.86 584.27 L840.03 579.38 L831.24 574.49 L822.5 569.6 L813.82 564.71 L805.2 559.82 L796.64 554.93 L788.16 550.04 L779.75 545.16 L771.43 540.27 L763.2 535.38 L755.06 530.49 L747.02 525.6 L739.09 520.71 L731.28 515.82 L723.58 510.93 L716 506.04 L708.55 501.15 L701.23 496.26 L694.05 491.37 L687.02 486.48 L680.13 481.6 L673.39 476.71 L666.81 471.82 L660.39 466.93 L654.14 462.04 L648.06 457.15 L642.15 452.26 L636.42 447.37 L630.88 442.48 L625.52 437.59 L620.34 432.7 L615.37 427.81 L610.59 422.92 L606 418.03 L601.63 413.15 L597.46 408.26 L593.49 403.37 L589.74 398.48 L586.2 393.59 L582.88 388.7 L579.78 383.81 L576.9 378.92 L574.25 374.03 L571.81 369.14 L569.61 364.25 L567.63 359.36 L565.88 354.47 L564.37 349.59 L563.08 344.7 L562.03 339.81 L561.21 334.92 L560.62 330.03 L560.27 325.14 L560.15 320.25 L560.27 315.36 L560.62 310.47 L561.21 305.58 L562.03 300.69 L563.08 295.8 L564.37 290.91 L565.88 286.03 L567.63 281.14 L569.61 276.25 L571.81 271.36 L574.25 266.47 L576.9 261.58 L579.78 256.69 L582.88 251.8 L586.2 246.91 L589.74 242.02 L593.49 237.13 L597.46 232.24 L601.63 227.35 L606 222.47 L610.59 217.58 L615.37 212.69 L620.34 207.8 L625.52 202.91 L630.88 198.02 L636.42 193.13 L642.15 188.24 L648.06 183.35 L654.14 178.46 L660.39 173.57 L666.81 168.68 L673.39 163.79 L680.13 158.9 L687.02 154.02 L694.05 149.13 L701.23 144.24 L708.55 139.35 L716 134.46 L723.58 129.57 L731.28 124.68 L739.09 119.79 L747.02 114.9 L755.06 110.01 L763.2 105.12 L771.43 100.23 L779.75 95.34 L788.16 90.46 L796.64 85.57 L805.2 80.68 L813.82 75.79 L822.5 70.9 L831.24 66.01 L840.03 61.12 L848.86 56.23 L857.73 51.34 L866.63 46.45 L875.55 41.56 L884.49 36.67 L893.44 31.78 L902.4 26.89"/>
<path d="M902.4 613.61 L892.16 608.72 L881.93 603.83 L871.71 598.94 L861.51 594.05 L851.35 589.16 L841.21 584.27 L831.12 579.38 L821.08 574.49 L811.09 569.6 L801.17 564.71 L791.31 559.82 L781.53 554.93 L771.83 550.04 L762.23 545.16 L752.72 540.27 L743.31 535.38 L734.01 530.49 L724.83 525.6 L715.76 520.71 L706.83 515.82 L698.03 510.93 L689.37 506.04 L680.86 501.15 L672.49 496.26 L664.29 491.37 L656.25 486.48 L648.37 481.6 L640.68 476.71 L633.16 471.82 L625.82 466.93 L618.68 462.04 L611.73 457.15 L604.97 452.26 L598.43 447.37 L592.09 442.48 L585.96 437.59 L580.05 432.7 L574.36 427.81 L568.9 422.92 L563.66 418.03 L558.66 413.15 L553.89 408.26 L549.36 403.37 L545.08 398.48 L541.03 393.59 L537.24 388.7 L533.7 383.81 L530.4 378.92 L527.37 374.03 L524.59 369.14 L522.07 364.25 L519.81 359.36 L517.81 354.47 L516.08 349.59 L514.61 344.7 L513.4 339.81 L512.47 334.92 L511.8 330.03 L511.39 325.14 L511.26 320.25 L511.39 315.36 L511.8 310.47 L512.47 305.58 L513.4 300.69 L514.61 295.8 L516.08 290.91 L517.81 286.03 L519.81 281.14 L522.07 276.25 L524.59 271.36 L527.37 266.47 L530.4 261.58 L533.7 256.69 L537.24 251.8 L541.03 246.91 L545.08 242.02 L549.36 237.13 L553.89 232.24 L558.66 227.35 L563.66 222.47 L568.9 217.58 L574.36 212.69 L580.05 207.8 L585.96 202.91 L592.09 198.02 L598.43 193.13 L604.97 188.24 L611.73 183.35 L618.68 178.46 L625.82 173.57 L633.16 168.68 L640.68 163.79 L648.37 158.9 L656.25 154.02 L664.29 149.13 L672.49 144.24 L680.86 139.35 L689.37 134.46 L698.03 129.57 L706.83 124.68 L715.76 119.79 L724.83 114.9 L734.01 110.01 L743.31 105.12 L752.72 100.23 L762.23 95.34 L771.83 90.46 L781.53 85.57 L791.31 80.68 L801.17 75.79 L811.09 70.9 L821.08 66.01 L831.12 61.12 L841.21 56.23 L851.35 51.34 L861.51 46.45 L871.71 41.56 L881.93 36.67 L892.16 31.78 L902.4 26.89"/>
<path d="M902.4 613.61 L890.88 608.72 L879.37 603.83 L867.88 598.94 L856.4 594.05 L844.96 589.16 L833.56 584.27 L822.21 579.38 L810.91 574.49 L799.68 569.6 L788.51 564.71 L777.42 559.82 L766.42 554.93 L755.51 550.04 L744.71 545.16 L734.01 540.27 L723.42 535.38 L712.96 530.49 L702.63 525.6 L692.43 520.71 L682.38 515.82 L672.48 510.93 L662.74 506.04 L653.16 501.15 L643.76 496.26 L634.53 491.37 L625.48 486.48 L616.62 481.6 L607.96 476.71 L599.5 471.82 L591.25 466.93 L583.21 462.04 L575.39 457.15 L567.8 452.26 L560.43 447.37 L553.3 442.48 L546.41 437.59 L539.76 432.7 L533.36 427.81 L527.21 422.92 L521.32 418.03 L515.69 413.15 L510.33 408.26 L505.23 403.37 L500.41 398.48 L495.86 393.59 L491.59 388.7 L487.61 383.81 L483.9 378.92 L480.49 374.03 L477.36 369.14 L474.53 364.25 L471.98 359.36 L469.74 354.47 L467.79 349.59 L466.13 344.7 L464.78 339.81 L463.72 334.92 L462.97 330.03 L462.52 325.14 L462.37 320.25 L462.52 315.36 L462.97 310.47 L463.72 305.58 L464.78 300.69 L466.13 295.8 L467.79 290.91 L469.74 286.03 L471.98 281.14 L474.53 276.25 L477.36 271.36 L480.49 266.47 L483.9 261.58 L487.61 256.69 L491.59 251.8 L495.86 246.91 L500.41 242.02 L505.23 237.13 L510.33 232.24 L515.69 227.35 L521.32 222.47 L527.21 217.58 L533.36 212.69 L539.76 207.8 L546.41 202.91 L553.3 198.02 L560.43 193.13 L567.8 188.24 L575.39 183.35 L583.21 178.46 L591.25 173.57 L599.5 168.68 L607.96 163.79 L616.62 158.9 L625.48 154.02 L634.53 149.13 L643.76 144.24 L653.16 139.35 L662.74 134.46 L672.48 129.57 L682.38 124.68 L692.43 119.79 L702.63 114.9 L712.96 110.01 L723.42 105.12 L734.01 100.23 L744.71 95.34 L755.51 90.46 L766.42 85.57 L777.42 80.68 L788.51 75.79 L799.68 70.9 L810.91 66.01 L822.21 61.12 L833.56 56.23 L844.96 51.34 L856.4 46.45 L867.88 41.56 L879.37 36.67 L890.88 31.78 L902.4 26.89"/>
<path d="M902.4 613.61 L889.6 608.72 L876.81 603.83 L864.04 598.94 L851.29 594.05 L838.58 589.16 L825.92 584.27 L813.3 579.38 L800.75 574.49 L788.26 569.6 L775.86 564.71 L763.54 559.82 L751.31 554.93 L739.19 550.04 L727.18 545.16 L715.3 540.27 L703.54 535.38 L691.91 530.49 L680.43 525.6 L669.11 520.71 L657.94 515.82 L646.94 510.93 L636.11 506.04 L625.47 501.15 L615.02 496.26 L604.76 491.37 L594.71 486.48 L584.87 481.6 L575.25 476.71 L565.85 471.82 L556.68 466.93 L547.75 462.04 L539.06 457.15 L530.62 452.26 L522.43 447.37 L514.51 442.48 L506.85 437.59 L499.46 432.7 L492.35 427.81 L485.52 422.92 L478.98 418.03 L472.72 413.15 L466.76 408.26 L461.1 403.37 L455.74 398.48 L450.69 393.59 L445.95 388.7 L441.52 383.81 L437.4 378.92 L433.61 374.03 L430.13 369.14 L426.98 364.25 L424.16 359.36 L421.66 354.47 L419.49 349.59 L417.66 344.7 L416.15 339.81 L414.98 334.92 L414.15 330.03 L413.64 325.14 L413.47 320.25 L413.64 315.36 L414.15 310.47 L414.98 305.58 L416.15 300.69 L417.66 295.8 L419.49 290.91 L421.66 286.03 L424.16 281.14 L426.98 276.25 L430.13 271.36 L433.61 266.47 L437.4 261.58 L441.52 256.69 L445.95 251.8 L450.69 246.91 L455.74 242.02 L461.1 237.13 L466.76 232.24 L472.72 227.35 L478.98 222.47 L485.52 217.58 L492.35 212.69 L499.46 207.8 L506.85 202.91 L514.51 198.02 L522.43 193.13 L530.62 188.24 L539.06 183.35 L547.75 178.46 L556.68 173.57 L565.85 168.68 L575.25 163.79 L584.87 158.9 L594.71 154.02 L604.76 149.13 L615.02 144.24 L625.47 139.35 L636.11 134.46 L646.94 129.57 L657.94 124.68 L669.11 119.79 L680.43 114.9 L691.91 110.01 L703.54 105.12 L715.3 100.23 L727.18 95.34 L739.19 90.46 L751.31 85.57 L763.54 80.68 L775.86 75.79 L788.26 70.9 L800.75 66.01 L813.3 61.12 L825.92 56.23 L838.58 51.34 L851.29 46.45 L864.04 41.56 L876.81 36.67 L889.6 31.78 L902.4 26.89"/>
<path d="M902.4 613.61 L888.32 608.72 L874.25 603.83 L860.2 598.94 L846.18 594.05 L832.2 589.16 L818.27 584.27 L804.39 579.38 L790.58 574.49 L776.85 569.6 L763.2 564.71 L749.65 559.82 L736.21 554.93 L722.87 550.04 L709.66 545.16 L696.59 540.27 L683.65 535.38 L670.86 530.49 L658.24 525.6 L645.78 520.71 L633.49 515.82 L621.39 510.93 L609.48 506.04 L597.78 501.15 L586.28 496.26 L575 491.37 L563.94 486.48 L553.12 481.6 L542.53 476.71 L532.19 471.82 L522.11 466.93 L512.28 462.04 L502.72 457.15 L493.44 452.26 L484.44 447.37 L475.72 442.48 L467.3 437.59 L459.17 432.7 L451.35 427.81 L443.84 422.92 L436.64 418.03 L429.76 413.15 L423.2 408.26 L416.97 403.37 L411.08 398.48 L405.52 393.59 L400.3 388.7 L395.43 383.81 L390.91 378.92 L386.73 374.03 L382.91 369.14 L379.44 364.25 L376.34 359.36 L373.59 354.47 L371.2 349.59 L369.18 344.7 L367.53 339.81 L366.24 334.92 L365.32 330.03 L364.77 325.14 L364.58 320.25 L364.77 315.36 L365.32 310.47 L366.24 305.58 L367.53 300.69 L369.18 295.8 L371.2 290.91 L373.59 286.03 L376.34 281.14 L379.44 276.25 L382.91 271.36 L386.73 266.47 L390.91 261.58 L395.43 256.69 L400.3 251.8 L405.52 246.91 L411.08 242.02 L416.97 237.13 L423.2 232.24 L429.76 227.35 L436.64 222.47 L443.84 217.58 L451.35 212.69 L459.17 207.8 L467.3 202.91 L475.72 198.02 L484.44 193.13 L493.44 188.24 L502.72 183.35 L512.28 178.46 L522.11 173.57 L532.19 168.68 L542.53 163.79 L553.12 158.9 L563.94 154.02 L575 149.13 L586.28 144.24 L597.78 139.35 L609.48 134.46 L621.39 129.57 L633.49 124.68 L645.78 119.79 L658.24 114.9 L670.86 110.01 L683.65 105.12 L696.59 100.23 L709.66 95.34 L722.87 90.46 L736.21 85.57 L749.65 80.68 L763.2 75.79 L776.85 70.9 L790.58 66.01 L804.39 61.12 L818.27 56.23 L832.2 51.34 L846.18 46.45 L860.2 41.56 L874.25 36.67 L888.32 31.78 L902.4 26.89"/>
<path d="M902.4 613.61 L887.04 608.72 L871.69 603.83 L856.37 598.94 L841.07 594.05 L825.82 589.16 L810.62 584.27 L795.48 579.38 L780.42 574.49 L765.44 569.6 L750.55 564.71 L735.77 559.82 L721.1 554.93 L706.55 550.04 L692.14 545.16 L677.88 540.27 L663.76 535.38 L649.81 530.49 L636.04 525.6 L622.45 520.71 L609.04 515.82 L595.84 510.93 L582.85 506.04 L570.08 501.15 L557.54 496.26 L545.23 491.37 L533.17 486.48 L521.36 481.6 L509.81 476.71 L498.54 471.82 L487.53 466.93 L476.82 462.04 L466.39 457.15 L456.26 452.26 L446.44 447.37 L436.93 442.48 L427.74 437.59 L418.88 432.7 L410.34 427.81 L402.15 422.92 L394.29 418.03 L386.79 413.15 L379.64 408.26 L372.84 403.37 L366.41 398.48 L360.35 393.59 L354.66 388.7 L349.34 383.81 L344.41 378.92 L339.85 374.03 L335.68 369.14 L331.9 364.25 L328.51 359.36 L325.51 354.47 L322.91 349.59 L320.71 344.7 L318.9 339.81 L317.5 334.92 L316.49 330.03 L315.89 325.14 L315.69 320.25 L315.89 315.36 L316.49 310.47 L317.5 305.58 L318.9 300.69 L320.71 295.8 L322.91 290.91 L325.51 286.03 L328.51 281.14 L331.9 276.25 L335.68 271.36 L339.85 266.47 L344.41 261.58 L349.34 256.69 L354.66 251.8 L360.35 246.91 L366.41 242.02 L372.84 237.13 L379.64 232.24 L386.79 227.35 L394.29 222.47 L402.15 217.58 L410.34 212.69 L418.88 207.8 L427.74 202.91 L436.93 198.02 L446.44 193.13 L456.26 188.24 L466.39 183.35 L476.82 178.46 L487.53 173.57 L498.54 168.68 L509.81 163.79 L521.36 158.9 L533.17 154.02 L545.23 149.13 L557.54 144.24 L570.08 139.35 L582.85 134.46 L595.84 129.57 L609.04 124.68 L622.45 119.79 L636.04 114.9 L649.81 110.01 L663.76 105.12 L677.88 100.23 L692.14 95.34 L706.55 90.46 L721.1 85.57 L735.77 80.68 L750.55 75.79 L765.44 70.9 L780.42 66.01 L795.48 61.12 L810.62 56.23 L825.82 51.34 L841.07 46.45 L856.37 41.56 L871.69 36.67 L887.04 31.78 L902.4 26.89"/>
</g>
<g font-family="'DejaVu Sans','Liberation Sans',sans-serif" font-size="9.5" fill="#7f7f7f" text-anchor="middle">
<text x="316.29" y="329.7">+180<tspan font-size="6.75" dx="2.3" dy="-5.4">∘</tspan></text>
<text x="414.07" y="329.7">+150<tspan font-size="6.75" dx="2.3" dy="-5.4">∘</tspan></text>
<text x="511.86" y="329.7">+120<tspan font-size="6.75" dx="2.3" dy="-5.4">∘</tspan></text>
<text x="609.64" y="329.7">+90<tspan font-size="6.75" dx="2.3" dy="-5.4">∘</tspan></text>
<text x="707.43" y="329.7">+60<tspan font-size="6.75" dx="2.3" dy="-5.4">∘</tspan></text>
<text x="805.22" y="329.7">+30<tspan font-size="6.75" dx="2.3" dy="-5.4">∘</tspan></text>
<text x="903" y="329.7">+0<tspan font-size="6.75" dx="2.3" dy="-5.4">∘</tspan></text>
<text x="1000.78" y="329.7">+330<tspan font-size="6.75" dx="2.3" dy="-5.4">∘</tspan></text>
<text x="1098.57" y="329.7">+300<tspan font-size="6.75" dx="2.3" dy="-5.4">∘</tspan></text>
<text x="1196.36" y="329.7">+270<tspan font-size="6.75" dx="2.3" dy="-5.4">∘</tspan></text>
<text x="1294.14" y="329.7">+240<tspan font-size="6.75" dx="2.3" dy="-5.4">∘</tspan></text>
<text x="1391.92" y="329.7">+210<tspan font-size="6.75" dx="2.3" dy="-5.4">∘</tspan></text>
<text x="1489.71" y="329.7">+180<tspan font-size="6.75" dx="2.3" dy="-5.4">∘</tspan></text>
<text x="903.2" y="24.59">+90<tspan font-size="6.75" dx="2.3" dy="-5.4">∘</tspan></text>
<text x="903.2" y="122.38">+60<tspan font-size="6.75" dx="2.3" dy="-5.4">∘</tspan></text>
<text x="903.2" y="220.16">+30<tspan font-size="6.75" dx="2.3" dy="-5.4">∘</tspan></text>
<text x="903.2" y="329.7">+0<tspan font-size="6.75" dx="2.3" dy="-5.4">∘</tspan></text>
<text x="903.2" y="427.48">−30<tspan font-size="6.75" dx="2.3" dy="-5.4">∘</tspan></text>
<text x="903.2" y="525.27">−60<tspan font-size="6.75" dx="2.3" dy="-5.4">∘</tspan></text>
<text x="903.2" y="623.06">−90<tspan font-size="6.75" dx="2.3" dy="-5.4">∘</tspan></text>
</g>
<g font-family="'DejaVu Sans Mono','Liberation Mono',monospace" font-size="13.89" fill="#fff">
<text x="315.3" y="29.7">NL0014</text>
<text x="315.3" y="42.8">Beg: 20251204 22:39:41 (sol = 252.68°)</text>
<text x="315.3" y="56.6">End: 20251205 03:55:01 (sol = 252.90°)</text>
<text x="315.3" y="69.1">--------------------------------------</text>
<text x="315.3" y="81.9">...: 11</text>
<text x="315.3" y="95">HYD: 4</text>
<text x="315.3" y="108.2">DKD: 1</text>
<text x="315.3" y="121.7">DPC: 1</text>
</g>
<g fill="none" stroke="#808080" stroke-width="1.1" opacity="0.85">
<path d="M502.7 192.3 L542.3 156"/>
<path d="M497.7 182.7 L526.7 170.7"/>
<path d="M523.3 184.7 L536.7 187.3"/>
<path d="M534 184.6 L536.9 187.6"/>
<path d="M559 271.5 L574.5 254.5"/>
<path d="M406.5 270.5 L416.5 275"/>
<path d="M456.7 238 L467.3 245.3"/>
<path d="M478.7 221.3 L481.3 220"/>
<path d="M1183.3 145.8 L1205 148"/>
<path d="M1275.8 168.7 L1285.8 180.8"/>
<path d="M1255.8 153.3 L1261.7 150"/>
<path d="M1279.2 184.2 L1286.7 182"/>
<path d="M592 136.5 L603 135"/>
</g>
<g fill="none" stroke="#ffffff" stroke-width="1.39" stroke-dasharray="1.39 2.29" opacity="0.27">
<path d="M536.7 187.3 L542.7 189.3 L552.3 195 L563.7 204.3 L573 216 L581 228 L600 253 L617.8 274.4 L631 294.4 L646.7 314.4 L664.4 336.7 L684.4 354.4 L706.7 370 L751 394.4 L795.6 414.4"/>
<path d="M505.3 186.3 L514.3 193.3 L520.7 202.3 L525.3 212.3 L530.7 226.3 L535 233.3 L541.7 250 L550 265 L555.6 274.4 L568.9 292.2 L584.4 312.2 L606.7 334.4 L651 367.8 L684.4 390 L717.8 405.6"/>
<path d="M603 135 L613 133.5 L630 132.5 L646.7 134 L660 138.5 L668.3 146.7 L671.7 171.7 L673.3 196.7 L676.7 221.7 L681.7 246.7 L684.4 270 L702.2 298.9 L720 327.8 L735.6 350 L751 372.2 L766.7 394.4 L780 412.2"/>
<path d="M680 125 L682.5 140 L683.3 171.7 L682.5 196.7 L683.3 223.3 L686.7 246.7 L691 270 L713.3 307.8 L728.9 334.4 L750 366 L772 398 L790 420"/>
<path d="M455.3 241.3 L456 253 L456.7 262.7 L457.3 274.7 L458.7 285.3 L460.7 293.3 L464 301.3 L468.9 314.4 L484 339 L506.7 363.3 L529 385.6 L555.6 407.8 L584 425.6 L613 437 L635.6 440"/>
<path d="M460 250 L460.7 262.7 L461.3 274.7 L462.7 285.3 L465.3 296 L469.3 306.7 L474 317.3 L484.4 334.4 L513.3 363.3 L551 394.4 L595.6 423.3 L637.8 434.4"/>
<path d="M502.7 192.3 L500.7 195 L495.7 200.3 L491 206 L484 214 L476 224"/>
<path d="M574.5 254.5 L583.3 245 L590 239.2 L604.2 225 L611.7 219.2 L633.3 196.7 L646.7 186.7 L656.7 180 L690 157"/>
<path d="M603 137 L606.5 150.5 L608.9 157.8 L609.2 180 L609.2 221.7 L611.7 243.3 L618.3 273.3 L630 293.3 L646.7 313.3 L656.7 326.7 L676 346 L700 363 L745 388 L790 409"/>
<path d="M606 136 L633.3 130.9 L682.2 122.3 L731 111.3 L780 99 L829 86.9 L865.6 80.8 L900 78"/>
<path d="M416.5 275 L430 281 L445 287 L458 291"/>
<path d="M406.5 270.5 L392 263 L376 255 L362 248.5"/>
<path d="M1205 148 L1213.3 149.2 L1230 151.7 L1246.7 155.8 L1263.3 160.8 L1280 165.8 L1296.7 170.8"/>
<path d="M1255 158 L1270 163 L1290 169 L1310 176"/>
<path d="M1316.7 225.8 L1333.3 221.3 L1355 219.2 L1380 218.3 L1405 219.7"/>
<path d="M1299.2 243 L1313.3 240.8 L1346.7 240 L1380 241.3 L1413.3 245 L1445 249.2"/>
<path d="M1468 270 L1474 285 L1476 300 L1472 316 L1462 335 L1448 352 L1436 366"/>
</g>
<path d="M478.64 308.45 L478.74 307.81 L478.86 307.18 L479 306.54 L479.16 305.9 L479.34 305.27 L479.54 304.64 L479.77 304.01 L480.01 303.38 L480.27 302.76 L480.56 302.14 L480.86 301.52 L481.19 300.91 L481.53 300.3 L481.89 299.7 L482.27 299.11 L482.67 298.52 L483.09 297.93 L483.52 297.36 L483.97 296.79 L484.44 296.23 L484.92 295.68 L485.42 295.13 L485.93 294.6 L486.45 294.08 L486.99 293.56 L487.55 293.05 L488.11 292.56 L488.69 292.08 L489.28 291.6 L489.88 291.14 L490.49 290.69 L491.11 290.25 L491.73 289.83 L492.37 289.41 L493.02 289.01 L493.67 288.63 L494.33 288.25 L494.99 287.9 L495.66 287.55 L496.33 287.22 L497.01 286.9 L497.69 286.6 L498.37 286.32 L499.06 286.05 L499.75 285.79 L500.44 285.55 L501.12 285.32 L501.81 285.12 L502.5 284.92 L503.19 284.75 L503.87 284.59 L504.55 284.45 L505.23 284.32 L505.9 284.21 L506.57 284.12 L507.24 284.04 L507.9 283.98 L508.55 283.94 L509.2 283.91 L509.84 283.9 L510.48 283.91 L511.1 283.94 L511.72 283.98 L512.33 284.04 L512.94 284.12 L513.53 284.21 L514.11 284.32 L514.69 284.45 L515.25 284.59 L515.81 284.75 L516.35 284.92 L516.88 285.12 L517.4 285.32 L517.91 285.55 L518.41 285.79 L518.9 286.05 L519.37 286.32 L519.84 286.6 L520.29 286.9 L520.73 287.22 L521.15 287.55 L521.57 287.9 L521.97 288.25 L522.35 288.63 L522.73 289.01 L523.09 289.41 L523.44 289.83 L523.77 290.25 L524.09 290.69 L524.4 291.14 L524.7 291.6 L524.98 292.08 L525.25 292.56 L525.5 293.05 L525.74 293.56 L525.97 294.08 L526.18 294.6 L526.39 295.13 L526.57 295.68 L526.75 296.23 L526.91 296.79 L527.06 297.36 L527.2 297.93 L527.32 298.52 L527.43 299.11 L527.52 299.7 L527.61 300.3 L527.68 300.91 L527.73 301.52 L527.78 302.14 L527.81 302.76 L527.83 303.38 L527.84 304.01 L527.83 304.64 L527.81 305.27 L527.78 305.9 L527.74 306.54 L527.68 307.18 L527.61 307.81 L527.53 308.45 L527.44 309.09 L527.34 309.73 L527.22 310.36 L527.09 311 L526.95 311.63 L526.8 312.26 L526.63 312.89 L526.46 313.52 L526.27 314.14 L526.07 314.76 L525.86 315.37 L525.64 315.98 L525.4 316.58 L525.16 317.18 L524.9 317.77 L524.63 318.35 L524.35 318.93 L524.06 319.5 L523.76 320.07 L523.44 320.62 L523.12 321.17 L522.79 321.71 L522.44 322.24 L522.08 322.76 L521.71 323.27 L521.34 323.77 L520.95 324.26 L520.55 324.74 L520.14 325.21 L519.72 325.66 L519.29 326.11 L518.85 326.54 L518.4 326.96 L517.94 327.37 L517.47 327.76 L516.99 328.14 L516.5 328.51 L516 328.87 L515.49 329.21 L514.98 329.53 L514.45 329.84 L513.92 330.14 L513.38 330.42 L512.83 330.69 L512.28 330.94 L511.71 331.18 L511.14 331.4 L510.56 331.6 L509.98 331.79 L509.39 331.97 L508.79 332.12 L508.18 332.26 L507.58 332.39 L506.96 332.5 L506.34 332.59 L505.72 332.66 L505.09 332.72 L504.46 332.76 L503.83 332.79 L503.19 332.8 L502.55 332.79 L501.91 332.76 L501.27 332.72 L500.62 332.66 L499.98 332.59 L499.33 332.5 L498.69 332.39 L498.05 332.26 L497.4 332.12 L496.76 331.97 L496.13 331.79 L495.49 331.6 L494.86 331.4 L494.23 331.18 L493.61 330.94 L492.99 330.69 L492.38 330.42 L491.78 330.14 L491.18 329.84 L490.59 329.53 L490 329.21 L489.43 328.87 L488.86 328.51 L488.3 328.14 L487.76 327.76 L487.22 327.37 L486.7 326.96 L486.18 326.54 L485.68 326.11 L485.19 325.66 L484.72 325.21 L484.26 324.74 L483.81 324.26 L483.38 323.77 L482.97 323.27 L482.57 322.76 L482.18 322.24 L481.82 321.71 L481.47 321.17 L481.13 320.62 L480.82 320.07 L480.52 319.5 L480.24 318.93 L479.99 318.35 L479.75 317.77 L479.53 317.18 L479.33 316.58 L479.15 315.98 L478.99 315.37 L478.85 314.76 L478.74 314.14 L478.64 313.52 L478.56 312.89 L478.51 312.26 L478.48 311.63 L478.47 311 L478.48 310.36 L478.51 309.73 L478.56 309.09 L478.64 308.45" fill="none" stroke="#a5f02a" stroke-width="2.08" stroke-linejoin="round"/>
<path d="M1084.67 96.76 L1082.94 96.15 L1081.21 95.53 L1079.48 94.91 L1077.76 94.29 L1076.05 93.66 L1074.33 93.03 L1072.63 92.39 L1070.93 91.76 L1069.24 91.12 L1067.56 90.47 L1065.89 89.83 L1064.24 89.19 L1062.59 88.54 L1060.96 87.89 L1059.34 87.25 L1057.74 86.6 L1056.15 85.95 L1054.59 85.31 L1053.04 84.67 L1051.51 84.03 L1050.01 83.39 L1048.52 82.76 L1047.07 82.12 L1045.63 81.5 L1044.23 80.88 L1042.85 80.26 L1041.51 79.65 L1040.19 79.05 L1038.91 78.45 L1037.67 77.87 L1036.46 77.29 L1035.28 76.72 L1034.15 76.16 L1033.06 75.61 L1032.01 75.08 L1031.01 74.55 L1030.06 74.04 L1029.15 73.55 L1028.3 73.06 L1027.5 72.6 L1026.75 72.15 L1026.06 71.71 L1025.43 71.3 L1024.86 70.9 L1024.35 70.52 L1023.91 70.17 L1023.53 69.83 L1023.22 69.52 L1022.98 69.22 L1022.82 68.95 L1022.72 68.71 L1022.7 68.49 L1022.75 68.29 L1022.89 68.12 L1023.1 67.97 L1023.38 67.85 L1023.75 67.76 L1024.2 67.69 L1024.72 67.65 L1025.33 67.64 L1026.02 67.65 L1026.78 67.69 L1027.63 67.76 L1028.55 67.85 L1029.55 67.97 L1030.63 68.12" fill="none" stroke="#e11af5" stroke-width="2.08" stroke-linejoin="round"/>
<path d="M773.8 68.29 L773.82 68.49 L773.76 68.71 L773.61 68.95 L773.39 69.22 L773.1 69.52 L772.73 69.83 L772.28 70.17 L771.77 70.52 L771.19 70.9 L770.54 71.3 L769.83 71.71 L769.05 72.15 L768.22 72.6 L767.33 73.06 L766.38 73.55 L765.38 74.04 L764.32 74.55 L763.22 75.08 L762.07 75.61 L760.87 76.16 L759.63 76.72 L758.35 77.29 L757.03 77.87 L755.67 78.45 L754.27 79.05 L752.84 79.65 L751.38 80.26 L749.89 80.88 L748.36 81.5 L746.81 82.12 L745.23 82.76 L743.63 83.39 L742 84.03 L740.35 84.67 L738.68 85.31 L736.99 85.95 L735.28 86.6 L733.56 87.25 L731.82 87.89 L730.06 88.54 L728.29 89.19 L726.51 89.83 L724.72 90.47 L722.92 91.12 L721.11 91.76 L719.29 92.39 L717.47 93.03 L715.64 93.66 L713.8 94.29 L711.96 94.91 L710.12 95.53 L708.28 96.15 L706.43 96.76 L704.59 97.36 L702.74 97.96 L700.9 98.56 L699.06 99.15 L697.22 99.73 L695.39 100.3 L693.56 100.87 L691.73 101.44 L689.92 101.99 L688.11 102.54 L686.31 103.08 L684.51 103.62 L682.73 104.14 L680.95 104.66 L679.19 105.17 L677.44 105.67 L675.7 106.16 L673.97 106.64 L672.26 107.11 L670.56 107.58 L668.87 108.03 L667.2 108.48 L665.55 108.91 L663.91 109.34 L662.29 109.76 L660.69 110.16 L659.11 110.56 L657.55 110.94 L656 111.32 L654.48 111.68 L652.98 112.03 L651.5 112.37 L650.04 112.71 L648.6 113.03 L647.19 113.33 L645.8 113.63 L644.43 113.92 L643.09 114.19 L641.78 114.45 L640.49 114.71 L639.23 114.94 L637.99 115.17 L636.79 115.39 L635.61 115.59 L634.46 115.78 L633.34 115.96" fill="none" stroke="#e11af5" stroke-width="2.08" stroke-linejoin="round"/>
<path d="M1171.83 116.13 L1171.64 116.29 L1171.4 116.43 L1171.13 116.56 L1170.82 116.68 L1170.48 116.78 L1170.09 116.88 L1169.67 116.96 L1169.22 117.03 L1168.73 117.08 L1168.2 117.13 L1167.64 117.16 L1167.05 117.18 L1166.42 117.18 L1165.75 117.18 L1165.06 117.16 L1164.33 117.13 L1163.56 117.08 L1162.77 117.03 L1161.94 116.96 L1161.09 116.88 L1160.2 116.78 L1159.28 116.68 L1158.33 116.56 L1157.36 116.43 L1156.35 116.29 L1155.32 116.13 L1154.26 115.96 L1153.17 115.78 L1152.05 115.59 L1150.91 115.39 L1149.74 115.17 L1148.55 114.94 L1147.33 114.71 L1146.08 114.45 L1144.82 114.19 L1143.53 113.92 L1142.21 113.63 L1140.88 113.33 L1139.52 113.03 L1138.14 112.71 L1136.74 112.37 L1135.32 112.03 L1133.88 111.68 L1132.43 111.32 L1130.95 110.94 L1129.45 110.56 L1127.94 110.16 L1126.42 109.76 L1124.87 109.34 L1123.31 108.91 L1121.74 108.48 L1120.15 108.03 L1118.55 107.58 L1116.93 107.11 L1115.31 106.64 L1113.67 106.16 L1112.02 105.67 L1110.36 105.17 L1108.69 104.66 L1107.01 104.14 L1105.32 103.62 L1103.62 103.08 L1101.92 102.54 L1100.21 101.99 L1098.5 101.44 L1096.78 100.87 L1095.06 100.3 L1093.33 99.73 L1091.6 99.15 L1089.87 98.56 L1088.14 97.96 L1086.4 97.36 L1084.67 96.76" fill="none" stroke="#e11af5" stroke-width="2.08" stroke-linejoin="round"/>
<path d="M833.81 117.6 L834.09 116.98 L834.39 116.36 L834.71 115.73 L835.05 115.1 L835.4 114.47 L835.78 113.84 L836.17 113.2 L836.58 112.56 L837.01 111.93 L837.46 111.29 L837.93 110.65 L838.41 110.01 L838.91 109.38 L839.42 108.74 L839.95 108.11 L840.5 107.48 L841.06 106.85 L841.64 106.22 L842.23 105.6 L842.83 104.98 L843.45 104.37 L844.08 103.76 L844.72 103.16 L845.38 102.56 L846.04 101.98 L846.72 101.39 L847.4 100.82 L848.1 100.26 L848.8 99.7 L849.51 99.16 L850.23 98.62 L850.96 98.1 L851.69 97.58 L852.42 97.08 L853.16 96.59 L853.91 96.12 L854.66 95.66 L855.41 95.21 L856.16 94.78 L856.91 94.36 L857.67 93.96 L858.42 93.58 L859.17 93.21 L859.92 92.87 L860.67 92.54 L861.42 92.22 L862.16 91.93 L862.9 91.66 L863.63 91.41 L864.36 91.18 L865.08 90.97 L865.79 90.78 L866.5 90.61 L867.2 90.46 L867.89 90.34 L868.57 90.24 L869.25 90.16 L869.91 90.1 L870.57 90.07 L871.21 90.05 L871.84 90.07 L872.46 90.1 L873.07 90.16 L873.67 90.24 L874.26 90.34 L874.83 90.46 L875.39 90.61 L875.94 90.78 L876.47 90.97 L877 91.18 L877.5 91.41 L878 91.66 L878.48 91.93 L878.94 92.22 L879.39 92.54 L879.83 92.87 L880.25 93.21 L880.66 93.58 L881.05 93.96 L881.43 94.36 L881.79 94.78 L882.14 95.21 L882.47 95.66 L882.78 96.12 L883.08 96.59 L883.37 97.08 L883.63 97.58 L883.88 98.1 L884.12 98.62 L884.34 99.16 L884.54 99.7 L884.73 100.26 L884.9 100.82 L885.05 101.39 L885.19 101.98 L885.31 102.56 L885.41 103.16 L885.5 103.76 L885.57 104.37 L885.62 104.98 L885.66 105.6 L885.68 106.22 L885.68 106.85 L885.67 107.48 L885.64 108.11 L885.59 108.74 L885.52 109.38 L885.44 110.01 L885.35 110.65 L885.23 111.29 L885.1 111.93 L884.96 112.56 L884.8 113.2 L884.62 113.84 L884.42 114.47 L884.21 115.1 L883.99 115.73 L883.75 116.36 L883.49 116.98 L883.22 117.6 L882.93 118.22 L882.63 118.83 L882.31 119.44 L881.98 120.04 L881.64 120.64 L881.28 121.23 L880.9 121.81 L880.52 122.39 L880.12 122.97 L879.7 123.53 L879.28 124.09 L878.84 124.65 L878.39 125.19 L877.92 125.73 L877.45 126.26 L876.96 126.78 L876.46 127.29 L875.95 127.8 L875.43 128.29 L874.9 128.78 L874.36 129.26 L873.81 129.72 L873.25 130.18 L872.68 130.63 L872.1 131.07 L871.52 131.49 L870.92 131.91 L870.32 132.32 L869.71 132.71 L869.1 133.09 L868.47 133.47 L867.85 133.83 L867.21 134.18 L866.57 134.52 L865.93 134.85 L865.28 135.16 L864.62 135.47 L863.96 135.76 L863.3 136.04 L862.64 136.3 L861.97 136.56 L861.3 136.8 L860.63 137.03 L859.96 137.25 L859.28 137.45 L858.61 137.64 L857.93 137.82 L857.26 137.99 L856.58 138.14 L855.91 138.28 L855.24 138.41 L854.57 138.52 L853.9 138.62 L853.23 138.71 L852.57 138.78 L851.91 138.84 L851.26 138.89 L850.61 138.92 L849.96 138.94 L849.32 138.95 L848.68 138.94 L848.05 138.92 L847.43 138.89 L846.81 138.84 L846.21 138.78 L845.6 138.71 L845.01 138.62 L844.43 138.52 L843.85 138.41 L843.28 138.28 L842.73 138.14 L842.18 137.99 L841.64 137.82 L841.11 137.64 L840.6 137.45 L840.1 137.25 L839.6 137.03 L839.13 136.8 L838.66 136.56 L838.2 136.3 L837.76 136.04 L837.34 135.76 L836.92 135.47 L836.53 135.16 L836.14 134.85 L835.77 134.52 L835.42 134.18 L835.08 133.83 L834.76 133.47 L834.45 133.09 L834.16 132.71 L833.89 132.32 L833.63 131.91 L833.4 131.49 L833.17 131.07 L832.97 130.63 L832.79 130.18 L832.62 129.72 L832.47 129.26 L832.34 128.78 L832.23 128.29 L832.13 127.8 L832.06 127.29 L832 126.78 L831.97 126.26 L831.95 125.73 L831.96 125.19 L831.98 124.65 L832.02 124.09 L832.09 123.53 L832.17 122.97 L832.27 122.39 L832.39 121.81 L832.54 121.23 L832.7 120.64 L832.88 120.04 L833.08 119.44 L833.3 118.83 L833.55 118.22 L833.81 117.6" fill="none" stroke="#ffaa10" stroke-width="2.08" stroke-linejoin="round"/>
<path d="M408.9 213.1 L420 220.3" fill="none" stroke="#a5f02a" stroke-width="1.2"/>
<path d="M420 220.3 L422 222.7 L432 232 L444 248 L456 264 L466.7 276 L474.7 286.7 L481.3 296 L484.3 297 L487 299.5 L490.3 302 L493 303.6 L495 305 L499 307.3 L502.3 309.7" fill="none" stroke="#a5f02a" stroke-width="1.39" stroke-dasharray="1.39 2.29"/>
<path d="M470 239.7 L468.4 249.6" fill="none" stroke="#a5f02a" stroke-width="1.2"/>
<path d="M468.4 249.6 L469.3 250.7 L471.3 257.3 L474 265.3 L477.3 274.7 L481.3 284 L486.7 293.3 L493.3 301.3 L500.3 311.3" fill="none" stroke="#a5f02a" stroke-width="1.39" stroke-dasharray="1.39 2.29"/>
<path d="M393.9 275 L403.6 277.8" fill="none" stroke="#a5f02a" stroke-width="1.2"/>
<path d="M403.6 277.8 L413.3 280.7 L433.3 286.7 L453.3 292 L464 294.7 L474.7 298 L480 299.6 L485.7 301.3 L489 302.5 L495.7 304.3 L499.7 306 L504.3 307.7" fill="none" stroke="#a5f02a" stroke-width="1.39" stroke-dasharray="1.39 2.29"/>
<path d="M1221.7 168 L1229.2 168" fill="none" stroke="#a5f02a" stroke-width="1.2"/>
<path d="M1229.2 168 L1246.7 168.7 L1263.3 170 L1280 172.2 L1296.7 174.7 L1313.3 177.5 L1333.3 181.3" fill="none" stroke="#a5f02a" stroke-width="1.39" stroke-dasharray="1.39 2.29"/>
<path d="M470.2 185.6 L470 201.3 L469.3 213.3 L468.4 226.7 L468 238.7 L468.3 253.3 L468.7 262.7 L470 272 L472.7 281.3 L476.7 290.7 L481.3 305 L483 308 L485 311.3 L487 314.3 L489.5 318.3" fill="none" stroke="#a5f02a" stroke-width="1.39" stroke-dasharray="1.39 2.29"/>
<path d="M416.9 243.8 L429.8 231.3" fill="none" stroke="#e11af5" stroke-width="1.2"/>
<path d="M429.8 231.3 L437.8 224.2 L449.3 215.3 L467.6 202.9 L485.8 190.9 L498.2 183.3 L514.7 174 L547.3 157 L580 141 L605 129.5 L632.8 116.7 L645 111.7 L658 107" fill="none" stroke="#e11af5" stroke-width="1.39" stroke-dasharray="1.39 2.29"/>
<path d="M1146.4 107 L1141 105.5 L1120 98.9 L1109 95.5 L1099 92.5" fill="none" stroke="#e11af5" stroke-width="1.39" stroke-dasharray="1.39 2.29"/>
<path d="M1252 192.8 L1235.8 183.7" fill="none" stroke="#ffaa10" stroke-width="1.2"/>
<path d="M1236.1 183.6 L1216.7 173.3 L1194.4 161.7 L1172.2 150.6 L1151.1 140.6 L1116.7 126.4 L1075 108.2 L1033.3 89.9 L1018.9 84.1 L986.7 71.1 L964.4 62.2 L942.2 55 L932 52.3 L926.7 51.4 L920 52 L915.6 53.9 L908.9 61.1 L897.8 74.4 L886.7 92.2 L877.8 104.2 L870.6 117.4" fill="none" stroke="#ffaa10" stroke-width="1.39" stroke-dasharray="1.39 2.29"/>
<circle cx="470" cy="239.7" r="1.0" fill="#ff5a30"/>
<circle cx="393.9" cy="275" r="1.0" fill="#ff5a30"/>
<circle cx="1221.7" cy="168" r="1.0" fill="#ff5a30"/>
<circle cx="416.9" cy="243.8" r="1.0" fill="#ff5a30"/>
<circle cx="1252" cy="192.8" r="1.0" fill="#ff5a30"/>
<circle cx="1390.8" cy="211.7" r="1.0" fill="#ff5a30"/>
<path d="M486.3 318.3h6.4M489.5 315.1v6.4" stroke="#ff0000" stroke-width="1.2" fill="none"/>
<path d="M497.1 311.3h6.4M500.3 308.1v6.4" stroke="#ff0000" stroke-width="1.2" fill="none"/>
<path d="M499.1 309.7h6.4M502.3 306.5v6.4" stroke="#ff0000" stroke-width="1.2" fill="none"/>
<path d="M501.1 307.7h6.4M504.3 304.5v6.4" stroke="#ff0000" stroke-width="1.2" fill="none"/>
<path d="M1095.8 92.5h6.4M1099 89.3v6.4" stroke="#ff0000" stroke-width="1.2" fill="none"/>
<path d="M867.4 117.4h6.4M870.6 114.2v6.4" stroke="#ff0000" stroke-width="1.2" fill="none"/>
<g font-family="'DejaVu Sans','Liberation Sans',sans-serif" font-size="10.4" fill="#fff" text-anchor="middle">
<text x="502.5" y="310.9">HYD</text>
<text x="1097.65" y="95.5">DKD</text>
<text x="859.9" y="118.4">DPC</text>
</g>
<clipPath id="axclip"><rect x="19.5" y="641.5" width="1766" height="201"/></clipPath>
<g clip-path="url(#axclip)" font-family="'DejaVu Sans','Liberation Sans',sans-serif" font-size="28" fill="#535353" text-anchor="end">
<text transform="translate(148.6 642.71) rotate(-90) scale(0.96 1)">APR</text>
<text transform="translate(293.6 645.13) rotate(-90) scale(0.96 1)">MAY</text>
<text transform="translate(435.8 641.11) rotate(-90) scale(0.96 1)">JUN</text>
<text transform="translate(575.9 641.11) rotate(-90) scale(0.96 1)">JUL</text>
<text transform="translate(722.4 642.71) rotate(-90) scale(0.96 1)">AUG</text>
<text transform="translate(871.8 644.27) rotate(-90) scale(0.96 1)">SEP</text>
<text transform="translate(1015.9 644.01) rotate(-90) scale(0.96 1)">OCT</text>
<text transform="translate(1168.95 645.13) rotate(-90) scale(0.96 1)">NOV</text>
<text transform="translate(1318 645.13) rotate(-90) scale(0.96 1)">DEC</text>
<text transform="translate(1468.9 641.11) rotate(-90) scale(0.96 1)">JAN</text>
<text transform="translate(1627.85 645.13) rotate(-90) scale(0.96 1)">FEB</text>
<text transform="translate(1765.85 645.13) rotate(-90) scale(0.96 1)">MAR</text>
</g>
<g fill="#f083ee">
<rect x="106" y="832" width="23" height="4"/>
<rect x="165" y="832" width="180" height="4"/>
<rect x="366.2" y="832" width="258.8" height="4"/>
<rect x="635" y="832" width="150.8" height="4"/>
<rect x="807" y="832" width="91.8" height="4"/>
<rect x="920" y="832" width="52.8" height="4"/>
<rect x="984.2" y="832" width="81.6" height="4"/>
<rect x="1082" y="832" width="121" height="4"/>
<rect x="1244.2" y="832" width="81.6" height="4"/>
<rect x="1337" y="832" width="18" height="4"/>
<rect x="1381.2" y="832" width="62.6" height="4"/>
<rect x="1459.2" y="832" width="52.8" height="4"/>
<rect x="1523" y="832" width="24" height="4"/>
<rect x="1723.8" y="832" width="24.2" height="4"/>
<rect x="1758" y="832" width="24" height="4"/>
</g>
<g fill="#e311f6">
<rect x="165" y="816" width="23" height="4"/>
<rect x="223" y="816" width="62.8" height="4"/>
<rect x="312" y="816" width="28" height="4"/>
<rect x="366.2" y="816" width="125.8" height="4"/>
<rect x="508" y="816" width="145.8" height="4"/>
<rect x="704.2" y="816" width="32.5" height="4"/>
<rect x="773" y="816" width="72" height="4"/>
<rect x="870.8" y="816" width="117" height="4"/>
<rect x="1003" y="816" width="13.7" height="4"/>
<rect x="1062" y="816" width="150.8" height="4"/>
<rect x="1244.2" y="816" width="22.5" height="4"/>
<rect x="1293" y="816" width="22.8" height="4"/>
<rect x="1342.2" y="816" width="22.8" height="4"/>
<rect x="1386.2" y="816" width="42.6" height="4"/>
<rect x="1459.2" y="816" width="23.6" height="4"/>
<rect x="1548" y="816" width="22.8" height="4"/>
</g>
<g fill="#ff2000">
<rect x="165" y="800" width="23" height="4"/>
<rect x="258" y="800" width="229" height="4"/>
<rect x="508" y="800" width="107" height="4"/>
<rect x="625.8" y="800" width="92.2" height="4"/>
<rect x="729" y="800" width="96.8" height="4"/>
<rect x="948.8" y="800" width="200" height="4"/>
<rect x="1160" y="800" width="87.8" height="4"/>
<rect x="1258" y="800" width="185.8" height="4"/>
<rect x="1459.2" y="800" width="23.6" height="4"/>
<rect x="1552" y="800" width="23.8" height="4"/>
</g>
<g fill="#ffab10">
<rect x="194" y="783" width="24" height="4"/>
<rect x="321.2" y="783" width="185.8" height="4"/>
<rect x="518" y="783" width="23.2" height="4"/>
<rect x="557" y="783" width="126" height="4"/>
<rect x="807" y="783" width="23.8" height="4"/>
<rect x="954.2" y="783" width="18.6" height="4"/>
<rect x="988" y="783" width="137" height="4"/>
<rect x="1155" y="783" width="62.8" height="4"/>
<rect x="1244.2" y="783" width="22.5" height="4"/>
<rect x="1317.2" y="783" width="23.6" height="4"/>
<rect x="1396.2" y="783" width="22.6" height="4"/>
<rect x="1464.2" y="783" width="185.8" height="4"/>
</g>
<g fill="#ffee00">
<rect x="340.8" y="767" width="29.2" height="4"/>
<rect x="410" y="767" width="38" height="4"/>
<rect x="469.2" y="767" width="22.8" height="4"/>
<rect x="527" y="767" width="19.2" height="4"/>
<rect x="562" y="767" width="28" height="4"/>
<rect x="616.2" y="767" width="33" height="4"/>
<rect x="959.2" y="767" width="28.6" height="4"/>
<rect x="1062" y="767" width="23.8" height="4"/>
<rect x="1101.2" y="767" width="23.8" height="4"/>
<rect x="1160" y="767" width="33.8" height="4"/>
<rect x="1248" y="767" width="23.7" height="4"/>
<rect x="1425" y="767" width="87" height="4"/>
</g>
<g fill="#a2f52d">
<rect x="420" y="750" width="23" height="4"/>
<rect x="532" y="750" width="23.8" height="4"/>
<rect x="567.2" y="750" width="22.8" height="4"/>
<rect x="621.2" y="750" width="120.8" height="4"/>
<rect x="969.2" y="750" width="165.8" height="4"/>
<rect x="1185" y="750" width="160.8" height="4"/>
<rect x="1469.2" y="750" width="23.8" height="4"/>
</g>
<g fill="#58d400">
<rect x="429.2" y="734" width="23.8" height="4"/>
<rect x="576.2" y="734" width="156.6" height="4"/>
<rect x="993" y="734" width="112" height="4"/>
<rect x="1115.8" y="734" width="107.2" height="4"/>
<rect x="1263" y="734" width="29" height="4"/>
<rect x="1489.2" y="734" width="22.8" height="4"/>
</g>
<g fill="#00f776">
<rect x="591.2" y="718" width="23.8" height="4"/>
<rect x="655" y="718" width="117" height="4"/>
<rect x="1072" y="718" width="171" height="4"/>
<rect x="1263" y="718" width="24" height="4"/>
</g>
<g fill="#00dcff">
<rect x="596.2" y="701" width="136.6" height="4"/>
<rect x="1090.8" y="701" width="29.2" height="4"/>
<rect x="1198.8" y="701" width="24.2" height="4"/>
<rect x="1273" y="701" width="52.8" height="4"/>
</g>
<g fill="#0510c8">
<rect x="1111.2" y="685" width="23.8" height="4"/>
</g>
<g stroke="#ffffff" stroke-width="2.08" stroke-dasharray="2.08 3.44" fill="none" opacity="0.33">
<path d="M74 641.5 V842.5"/>
<path d="M218 641.5 V842.5"/>
<path d="M365 641.5 V842.5"/>
<path d="M504.7 641.5 V842.5"/>
<path d="M649.7 641.5 V842.5"/>
<path d="M796.7 641.5 V842.5"/>
<path d="M939.8 641.5 V842.5"/>
<path d="M1091 641.5 V842.5"/>
<path d="M1239 641.5 V842.5"/>
<path d="M1393.8 641.5 V842.5"/>
<path d="M1547.8 641.5 V842.5"/>
<path d="M1687 641.5 V842.5"/>
</g>
<path d="M1260 641.5 V842.5" stroke="#ff0000" stroke-width="2.08" stroke-dasharray="7.7 3.33" fill="none"/>
<g stroke="#fff" stroke-width="2.0" fill="none">
<path d="M113 834h8M117 830v8"/>
<path d="M240.7 834h8M244.7 830v8"/>
<path d="M511 834h8M515 830v8"/>
<path d="M706.8 834h8M710.8 830v8"/>
<path d="M832.7 834h8M836.7 830v8"/>
<path d="M961.8 834h8M965.8 830v8"/>
<path d="M985.7 834h8M989.7 830v8"/>
<path d="M1116 834h8M1120 830v8"/>
<path d="M1294.8 834h8M1298.8 830v8"/>
<path d="M1341.8 834h8M1345.8 830v8"/>
<path d="M1413 834h8M1417 830v8"/>
<path d="M1481.8 834h8M1485.8 830v8"/>
<path d="M1530.7 834h8M1534.7 830v8"/>
<path d="M1731.8 834h8M1735.8 830v8"/>
<path d="M1766 834h8M1770 830v8"/>
<path d="M171.8 818h8M175.8 814v8"/>
<path d="M255.7 818h8M259.7 814v8"/>
<path d="M323 818h8M327 814v8"/>
<path d="M436.8 818h8M440.8 814v8"/>
<path d="M598.8 818h8M602.8 814v8"/>
<path d="M716.8 818h8M720.8 814v8"/>
<path d="M792.7 818h8M796.7 814v8"/>
<path d="M938.8 818h8M942.8 814v8"/>
<path d="M1005.7 818h8M1009.7 814v8"/>
<path d="M1152.7 818h8M1156.7 814v8"/>
<path d="M1250.7 818h8M1254.7 814v8"/>
<path d="M1299.7 818h8M1303.7 814v8"/>
<path d="M1348.8 818h8M1352.8 814v8"/>
<path d="M1402.7 818h8M1406.7 814v8"/>
<path d="M1466.8 818h8M1470.8 814v8"/>
<path d="M1554.7 818h8M1558.7 814v8"/>
<path d="M173.8 802h8M177.8 798v8"/>
<path d="M378 802h8M382 798v8"/>
<path d="M544.8 802h8M548.8 798v8"/>
<path d="M681.8 802h8M685.8 798v8"/>
<path d="M740.7 802h8M744.7 798v8"/>
<path d="M1074.7 802h8M1078.7 798v8"/>
<path d="M1216.8 802h8M1220.8 798v8"/>
<path d="M1304.7 802h8M1308.7 798v8"/>
<path d="M1466.8 802h8M1470.8 798v8"/>
<path d="M1559.8 802h8M1563.8 798v8"/>
<path d="M201.8 785h8M205.8 781v8"/>
<path d="M399.7 785h8M403.7 781v8"/>
<path d="M524.8 785h8M528.8 781v8"/>
<path d="M638.8 785h8M642.8 781v8"/>
<path d="M814.8 785h8M818.8 781v8"/>
<path d="M958.8 785h8M962.8 781v8"/>
<path d="M1039.7 785h8M1043.7 781v8"/>
<path d="M1187.7 785h8M1191.7 781v8"/>
<path d="M1250.7 785h8M1254.7 781v8"/>
<path d="M1324.7 785h8M1328.7 781v8"/>
<path d="M1402.7 785h8M1406.7 781v8"/>
<path d="M1545.7 785h8M1549.7 781v8"/>
<path d="M356 769h8M360 765v8"/>
<path d="M425.7 769h8M429.7 765v8"/>
<path d="M476 769h8M480 765v8"/>
<path d="M534.8 769h8M538.8 765v8"/>
<path d="M570.7 769h8M574.7 765v8"/>
<path d="M630.7 769h8M634.7 765v8"/>
<path d="M973.8 769h8M977.8 765v8"/>
<path d="M1069.7 769h8M1073.7 765v8"/>
<path d="M1108.8 769h8M1112.8 765v8"/>
<path d="M1177.7 769h8M1181.7 765v8"/>
<path d="M1255.5 769h8M1259.5 765v8"/>
<path d="M1466.8 769h8M1470.8 765v8"/>
<path d="M426.8 752h8M430.8 748v8"/>
<path d="M539.7 752h8M543.7 748v8"/>
<path d="M574 752h8M578 748v8"/>
<path d="M703.8 752h8M707.8 748v8"/>
<path d="M1093.8 752h8M1097.8 748v8"/>
<path d="M1271 752h8M1275 748v8"/>
<path d="M1476.8 752h8M1480.8 748v8"/>
<path d="M436.8 736h8M440.8 732v8"/>
<path d="M630.7 736h8M634.7 732v8"/>
<path d="M1038.8 736h8M1042.8 732v8"/>
<path d="M1167.7 736h8M1171.7 732v8"/>
<path d="M1274.7 736h8M1278.7 732v8"/>
<path d="M1496.8 736h8M1500.8 732v8"/>
<path d="M598.8 720h8M602.8 716v8"/>
<path d="M726.8 720h8M730.8 716v8"/>
<path d="M1187.7 720h8M1191.7 716v8"/>
<path d="M1270.7 720h8M1274.7 716v8"/>
<path d="M686.8 703h8M690.8 699v8"/>
<path d="M1101.8 703h8M1105.8 699v8"/>
<path d="M1206.8 703h8M1210.8 699v8"/>
<path d="M1299.7 703h8M1303.7 699v8"/>
<path d="M1118.8 687h8M1122.8 683v8"/>
</g>
<g font-family="'DejaVu Sans','Liberation Sans',sans-serif" font-size="10.4" fill="#fff" text-anchor="middle">
<text x="117.6" y="832">KSE</text>
<text x="254.94" y="832">ETA</text>
<text x="495.29" y="832">NZC</text>
<text x="711.11" y="832">NDA</text>
<text x="853.35" y="832">SPE</text>
<text x="946.55" y="832">ARD</text>
<text x="1025.03" y="832">EGE</text>
<text x="1142.75" y="832">NTA</text>
<text x="1284.99" y="832">MON</text>
<text x="1343.85" y="832">URS</text>
<text x="1412.52" y="832">AHY</text>
<text x="1486.1" y="832">GUM</text>
<text x="1535.14" y="832">OHY</text>
<text x="1736.25" y="832">XHE</text>
<text x="1770.59" y="832">EVI</text>
<text x="176.46" y="815">AVB</text>
<text x="254.94" y="815">ELY</text>
<text x="323.61" y="815">CAM</text>
<text x="431.52" y="815">SSG</text>
<text x="578.67" y="815">PCA</text>
<text x="720.92" y="815">AUD</text>
<text x="809.21" y="815">AUR</text>
<text x="931.83" y="815">DSX</text>
<text x="1010.31" y="815">OCU</text>
<text x="1137.84" y="815">OER</text>
<text x="1255.56" y="815">DKD</text>
<text x="1304.61" y="815">DSV</text>
<text x="1353.66" y="815">ALY</text>
<text x="1407.62" y="815">JLE</text>
<text x="1471.38" y="815">SCC</text>
<text x="1559.67" y="815">FEV</text>
<text x="176.46" y="799">LYR</text>
<text x="372.66" y="799">JMC</text>
<text x="559.05" y="799">JPE</text>
<text x="671.87" y="799">PAU</text>
<text x="774.87" y="799">NIA</text>
<text x="1049.55" y="799">STA</text>
<text x="1206.51" y="799">NOO</text>
<text x="1353.66" y="799">COM</text>
<text x="1471.38" y="799">NCC</text>
<text x="1564.58" y="799">FED</text>
<text x="205.89" y="783">HVI</text>
<text x="411.9" y="783">ARI</text>
<text x="529.62" y="783">SZC</text>
<text x="617.91" y="783">CAP</text>
<text x="819.01" y="783">NUE</text>
<text x="961.26" y="783">OCT</text>
<text x="1059.36" y="783">ORI</text>
<text x="1186.89" y="783">AMO</text>
<text x="1255.56" y="783">DPC</text>
<text x="1329.13" y="783">XVI</text>
<text x="1407.62" y="783">QUA</text>
<text x="1559.67" y="783">AAN</text>
<text x="353.04" y="766">TAH</text>
<text x="431.52" y="766">JEA</text>
<text x="480.57" y="766">JIP</text>
<text x="539.43" y="766">PPS</text>
<text x="578.67" y="766">ZCS</text>
<text x="632.62" y="766">GDR</text>
<text x="971.07" y="766">DRA</text>
<text x="1074.08" y="766">LUM</text>
<text x="1113.32" y="766">RPU</text>
<text x="1177.08" y="766">THA</text>
<text x="1260.47" y="766">PSU</text>
<text x="1471.38" y="766">XCB</text>
<text x="431.52" y="750">JRC</text>
<text x="544.34" y="750">CAN</text>
<text x="578.67" y="750">FAN</text>
<text x="681.68" y="750">PER</text>
<text x="1049.55" y="750">CTA</text>
<text x="1265.37" y="750">HYD</text>
<text x="1481.19" y="750">XUM</text>
<text x="441.33" y="733">COR</text>
<text x="657.15" y="733">SDA</text>
<text x="1049.55" y="733">LMI</text>
<text x="1167.27" y="733">LEO</text>
<text x="1275.18" y="733">EHY</text>
<text x="1500.81" y="733">ECV</text>
<text x="603.2" y="717">JXA</text>
<text x="716.01" y="717">KCG</text>
<text x="1157.46" y="717">AND</text>
<text x="1275.18" y="717">DAD</text>
<text x="666.96" y="701">ERI</text>
<text x="1108.41" y="701">SLD</text>
<text x="1211.41" y="701">ORS</text>
<text x="1299.71" y="701">GEM</text>
<text x="1123.12" y="684">KUM</text>
</g>
<rect x="19.5" y="641.5" width="1766" height="201" fill="none" stroke="#fff" stroke-width="1"/>
<g stroke="#fff" stroke-width="1.1">
<path d="M19.5 842.5 v4.9"/>
<path d="M265.5 842.5 v4.9"/>
<path d="M510.5 842.5 v4.9"/>
<path d="M755.5 842.5 v4.9"/>
<path d="M1000.5 842.5 v4.9"/>
<path d="M1246.5 842.5 v4.9"/>
<path d="M1491.5 842.5 v4.9"/>
<path d="M1736.5 842.5 v4.9"/>
</g>
<g font-family="'DejaVu Sans','Liberation Sans',sans-serif" font-size="13.89" fill="#fff" text-anchor="middle">
<text x="19.8" y="862.3">0</text>
<text x="265" y="862.3">50</text>
<text x="510.2" y="862.3">100</text>
<text x="755.4" y="862.3">150</text>
<text x="1000.6" y="862.3">200</text>
<text x="1245.8" y="862.3">250</text>
<text x="1491" y="862.3">300</text>
<text x="1736.2" y="862.3">350</text>
<text x="902.5" y="881.6">Solar longitude (deg)</text>
</g>
</svg>
</body></html>
